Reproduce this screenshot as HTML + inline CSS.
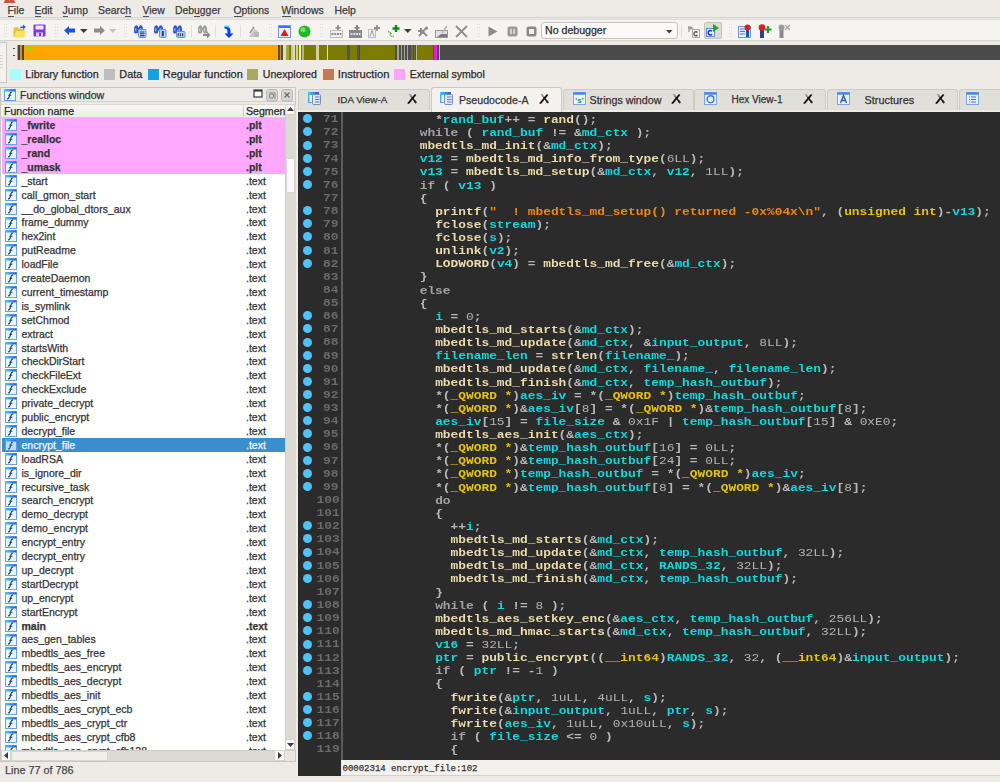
<!DOCTYPE html><html><head><meta charset="utf-8"><style>
*{margin:0;padding:0;box-sizing:border-box}
html,body{width:1000px;height:782px;overflow:hidden;background:#eeebe7;font-family:"Liberation Sans", sans-serif;font-size:10.6px;color:#2e2e2e}
.a{position:absolute}
.t{position:absolute;white-space:pre;line-height:1;-webkit-text-stroke:0.25px currentColor}
.code{position:absolute;white-space:pre;font-family:"Liberation Mono", monospace;font-weight:bold;font-size:12.87px;line-height:13px;transform:scaleY(0.9);transform-origin:0 10px}
.f{color:#e9dbac}
.k{color:#a3a3a3}
.p{color:#b9b9b9}
.v{color:#10d8dc}
.y{color:#e6c20e}
.s{color:#f2860f}
.n{color:#b4b4b4;font-weight:normal}
</style></head><body>
<div class="a" style="left:0;top:0;width:1000px;height:18px;background:#eeebe7;border-bottom:1px solid #d6d3ce"></div>
<div class="t" style="left:7.5px;top:6.3px;font-size:10.4px;color:#3c3c3c">File</div>
<div class="a" style="left:7.50px;top:16px;width:6.35px;height:1px;background:#555"></div>
<div class="t" style="left:34.5px;top:6.3px;font-size:10.4px;color:#3c3c3c">Edit</div>
<div class="a" style="left:34.50px;top:16px;width:6.94px;height:1px;background:#555"></div>
<div class="t" style="left:62.5px;top:6.3px;font-size:10.4px;color:#3c3c3c">Jump</div>
<div class="a" style="left:62.50px;top:16px;width:5.20px;height:1px;background:#555"></div>
<div class="t" style="left:98.0px;top:6.3px;font-size:10.4px;color:#3c3c3c">Search</div>
<div class="a" style="left:125.17px;top:16px;width:5.78px;height:1px;background:#555"></div>
<div class="t" style="left:142.5px;top:6.3px;font-size:10.4px;color:#3c3c3c">View</div>
<div class="a" style="left:142.50px;top:16px;width:6.94px;height:1px;background:#555"></div>
<div class="t" style="left:175.0px;top:6.3px;font-size:10.4px;color:#3c3c3c">Debugger</div>
<div class="a" style="left:194.08px;top:16px;width:5.78px;height:1px;background:#555"></div>
<div class="t" style="left:233.5px;top:6.3px;font-size:10.4px;color:#3c3c3c">Options</div>
<div class="a" style="left:233.50px;top:16px;width:8.09px;height:1px;background:#555"></div>
<div class="t" style="left:281.5px;top:6.3px;font-size:10.4px;color:#3c3c3c">Windows</div>
<div class="a" style="left:281.50px;top:16px;width:9.82px;height:1px;background:#555"></div>
<div class="t" style="left:334.5px;top:6.3px;font-size:10.4px;color:#3c3c3c">Help</div>
<svg class="a" style="left:3px;top:0" width="13" height="3" viewBox="0 0 13 3"><path d="M0.5 3l1.5-3h9l1.5 3z" fill="#c8603e"/><circle cx="4" cy="0.8" r="1.3" fill="#e2452a"/><circle cx="9" cy="0.8" r="1.3" fill="#e2452a"/></svg>
<div class="a" style="left:0;top:19px;width:1000px;height:22px;background:#f6f4f0;border-top:1px solid #dedbd6;border-bottom:1px solid #d6d3ce"></div>
<div class="a" style="left:4px;top:24px;width:3px;height:14px;background:repeating-linear-gradient(90deg,#e0ddd8 0 1px,transparent 1px 2px) 0 0/3px 1px,transparent;-webkit-mask:repeating-linear-gradient(#000 0 1px,transparent 1px 3px)"></div>
<svg class="a" style="left:13px;top:24px" width="13" height="14" viewBox="0 0 13 14"><path d="M0.5 3.5h5l1 1.5h5v8h-11z" fill="#e7c23a"/><path d="M1 13.5l2-6.5h10l-2 6.5z" fill="#f8e060"/><path d="M6.5 4.2q1-2.2 3.5-2.2v-1.5l3 2.5-3 2.5v-1.5q-2 0-3.5 0.2z" fill="#2a63e0"/><path d="M7.5 3q1-0.7 2.5-0.7" stroke="#6ac8ff" stroke-width="0.8" fill="none"/></svg>
<svg class="a" style="left:33px;top:24px" width="13" height="13" viewBox="0 0 13 13"><rect x="0.5" y="0.5" width="12" height="12" rx="1" fill="#7b39de"/><rect x="2.5" y="1.5" width="8" height="4" fill="#f3e4ee"/><rect x="3" y="8.5" width="7" height="4" fill="#d9d0f6"/><rect x="6" y="9" width="2" height="3" fill="#7b39de"/></svg>
<div class="a" style="left:55px;top:24px;width:3px;height:14px;background:repeating-linear-gradient(90deg,#e0ddd8 0 1px,transparent 1px 2px) 0 0/3px 1px,transparent;-webkit-mask:repeating-linear-gradient(#000 0 1px,transparent 1px 3px)"></div>
<svg class="a" style="left:64px;top:26px" width="11" height="9" viewBox="0 0 11 9"><path d="M0 4.5l5-4.5v2.5h6v4h-6v2.5z" fill="#1d4fe0"/></svg>
<svg class="a" style="left:80px;top:29px" width="8" height="4" viewBox="0 0 8 4"><path d="M0 0h7.5l-3.75 4z" fill="#3a3a3a"/></svg>
<svg class="a" style="left:94px;top:26px" width="11" height="9" viewBox="0 0 11 9"><path d="M11 4.5l-5-4.5v2.5h-6v4h6v2.5z" fill="#8e8e8e"/></svg>
<svg class="a" style="left:109px;top:29px" width="8" height="4" viewBox="0 0 8 4"><path d="M0 0h7.5l-3.75 4z" fill="#c4c2be"/></svg>
<div class="a" style="left:124px;top:24px;width:3px;height:14px;background:repeating-linear-gradient(90deg,#e0ddd8 0 1px,transparent 1px 2px) 0 0/3px 1px,transparent;-webkit-mask:repeating-linear-gradient(#000 0 1px,transparent 1px 3px)"></div>
<svg class="a" style="left:133px;top:25px" width="14" height="13" viewBox="0 0 14 13"><path d="M1.2 2.5q0.8-2.5 2.4-2.3q1.4 0.2 1.6 2.3h0.6q0.3-2.1 1.7-2.3q1.6-0.2 2.3 2.3l0.6 4.5q0 1.6-2 1.6t-2.2-1.6v-1.5h-1v1.5q-0.2 1.6-2.2 1.6t-2-1.6z" fill="#2f56c8"/><rect x="2" y="3" width="1.6" height="3.6" rx="0.8" fill="#6fa8f0"/><rect x="6.6" y="3" width="1.6" height="3.6" rx="0.8" fill="#6fa8f0"/><rect x="5.5" y="4.5" width="7.5" height="8" rx="1" fill="#bcd0ea" stroke="#6f93c4"/><path d="M7 7h4.5M7 8.8h4.5M7 10.6h4.5" stroke="#2c3f74" stroke-width="1.1"/></svg>
<svg class="a" style="left:153px;top:25px" width="14" height="13" viewBox="0 0 14 13"><path d="M1.2 2.5q0.8-2.5 2.4-2.3q1.4 0.2 1.6 2.3h0.6q0.3-2.1 1.7-2.3q1.6-0.2 2.3 2.3l0.6 4.5q0 1.6-2 1.6t-2.2-1.6v-1.5h-1v1.5q-0.2 1.6-2.2 1.6t-2-1.6z" fill="#2f56c8"/><rect x="2" y="3" width="1.6" height="3.6" rx="0.8" fill="#6fa8f0"/><rect x="6.6" y="3" width="1.6" height="3.6" rx="0.8" fill="#6fa8f0"/><rect x="6.5" y="4.5" width="6.5" height="8" rx="1" fill="#bcd0ea" stroke="#6f93c4"/><rect x="8.8" y="6" width="2" height="5.2" fill="#2a3f78"/></svg>
<svg class="a" style="left:172px;top:25px" width="14" height="13" viewBox="0 0 14 13"><path d="M1.2 2.5q0.8-2.5 2.4-2.3q1.4 0.2 1.6 2.3h0.6q0.3-2.1 1.7-2.3q1.6-0.2 2.3 2.3l0.6 4.5q0 1.6-2 1.6t-2.2-1.6v-1.5h-1v1.5q-0.2 1.6-2.2 1.6t-2-1.6z" fill="#2f56c8"/><rect x="2" y="3" width="1.6" height="3.6" rx="0.8" fill="#6fa8f0"/><rect x="6.6" y="3" width="1.6" height="3.6" rx="0.8" fill="#6fa8f0"/><rect x="4.5" y="6.5" width="8.5" height="6" rx="1" fill="#bcd0ea" stroke="#6f93c4"/><path d="M6.3 8.2v3M8.5 8.2v3M10.7 8.2v3" stroke="#2a3f78" stroke-width="1.1"/></svg>
<div class="a" style="left:191px;top:25px;width:1px;height:12px;background:#e2dfda"></div>
<svg class="a" style="left:197px;top:25px" width="14" height="13" viewBox="0 0 14 13"><path d="M1.2 2.5q0.8-2.5 2.4-2.3q1.4 0.2 1.6 2.3h0.6q0.3-2.1 1.7-2.3q1.6-0.2 2.3 2.3l0.6 4.5q0 1.6-2 1.6t-2.2-1.6v-1.5h-1v1.5q-0.2 1.6-2.2 1.6t-2-1.6z" fill="#9a9a9a"/><rect x="2" y="3" width="1.6" height="3.6" rx="0.8" fill="#c8c8c8"/><rect x="6.6" y="3" width="1.6" height="3.6" rx="0.8" fill="#c8c8c8"/><path d="M6 9h4v-2.5l3.5 3.5-3.5 3.5v-2.5h-4z" fill="#8a8a8a"/></svg>
<div class="a" style="left:215px;top:25px;width:1px;height:12px;background:#e2dfda"></div>
<svg class="a" style="left:224px;top:25px" width="10" height="13" viewBox="0 0 10 13"><path d="M0.5 1.5c4 -1 6 1 6 5v2h3l-4.5 4.5-4.5-4.5h3v-2c0-2-1-3-3-3z" fill="#0a3cf0"/><path d="M0.5 1.5c2-0.5 3.5 0 4.5 1" stroke="#2ad8f0" stroke-width="1.5" fill="none"/></svg>
<div class="a" style="left:240px;top:25px;width:1px;height:12px;background:#e2dfda"></div>
<svg class="a" style="left:247px;top:25px" width="13" height="13" viewBox="0 0 13 13"><path d="M2 12l5-8 4 2-3 6z" fill="#c9c9c9"/><rect x="7" y="7" width="5" height="5" fill="#b8b8b8"/><path d="M3 8l4-6" stroke="#9a9a9a" stroke-width="1.5"/></svg>
<div class="a" style="left:269px;top:24px;width:3px;height:14px;background:repeating-linear-gradient(90deg,#e0ddd8 0 1px,transparent 1px 2px) 0 0/3px 1px,transparent;-webkit-mask:repeating-linear-gradient(#000 0 1px,transparent 1px 3px)"></div>
<svg class="a" style="left:278px;top:25px" width="13" height="13" viewBox="0 0 13 13"><rect x="0.5" y="0.5" width="12" height="12" fill="#eaf4fa" stroke="#6c9ae6"/><rect x="1" y="1" width="11" height="2" fill="#3478e8"/><path d="M6.5 4l4 7h-8z" fill="#d81e1e"/></svg>
<svg class="a" style="left:298px;top:25px" width="13" height="13" viewBox="0 0 13 13"><circle cx="6.5" cy="6.5" r="6" fill="#22b822"/><circle cx="5" cy="4.8" r="2.5" fill="#8fe88f" opacity="0.8"/></svg>
<div class="a" style="left:320px;top:24px;width:3px;height:14px;background:repeating-linear-gradient(90deg,#e0ddd8 0 1px,transparent 1px 2px) 0 0/3px 1px,transparent;-webkit-mask:repeating-linear-gradient(#000 0 1px,transparent 1px 3px)"></div>
<svg class="a" style="left:330px;top:25px" width="13" height="13" viewBox="0 0 13 13"><path d="M8 0v6M5.5 2.8h5" stroke="#8e8e8e" stroke-width="1.8"/><rect x="0.5" y="5.5" width="12" height="7" fill="#f0f0f0" stroke="#bdbdbd"/><path d="M1.5 9h10" stroke="#8f8f8f" stroke-width="2.2" stroke-dasharray="2 0.8"/></svg>
<svg class="a" style="left:349px;top:25px" width="13" height="13" viewBox="0 0 13 13"><path d="M8 0v6M5.5 2.8h5" stroke="#7e7e7e" stroke-width="1.8"/><rect x="0" y="5" width="13" height="8" fill="#8a8a8a"/><path d="M1.5 9h10" stroke="#e0e0e0" stroke-width="2.2" stroke-dasharray="2 0.8"/></svg>
<svg class="a" style="left:368px;top:25px" width="13" height="13" viewBox="0 0 13 13"><path d="M9 0v6M6 3h6" stroke="#8e8e8e" stroke-width="1.8"/><rect x="0.5" y="4.5" width="7" height="8" fill="#f2f2f2" stroke="#bcbcbc"/><path d="M2 11.5l2-6 2 6" stroke="#9a9a9a" fill="none"/></svg>
<svg class="a" style="left:387px;top:25px" width="13" height="13" viewBox="0 0 13 13"><path d="M9 0v7M5.5 3.5h7" stroke="#13891a" stroke-width="2.4"/><path d="M1 6.5q2 0.5 3 2q-2 1 0 2.5q1.5 1 3 0" stroke="#5ab85a" stroke-width="1.5" fill="none" stroke-dasharray="1.2 0.5"/></svg>
<svg class="a" style="left:404px;top:29px" width="8" height="4" viewBox="0 0 8 4"><path d="M0 0h7.5l-3.75 4z" fill="#3a3a3a"/></svg>
<svg class="a" style="left:416px;top:25px" width="13" height="13" viewBox="0 0 13 13"><path d="M3 11l8-9M2 6h6M5 3v7M7 7l4 4M9 4l3-1" stroke="#8f8f8f" stroke-width="2"/></svg>
<svg class="a" style="left:435px;top:25px" width="13" height="13" viewBox="0 0 13 13"><rect x="0.5" y="5.5" width="12" height="7" fill="#e3e3e3" stroke="#9a9a9a"/><path d="M2 12l4-3h6v3z" fill="#7b7b7b"/><path d="M7 8l5-7" stroke="#b4b4b4" stroke-width="1.6"/></svg>
<svg class="a" style="left:455px;top:25px" width="13" height="13" viewBox="0 0 13 13"><path d="M1 1l11 11M12 1l-11 11" stroke="#8e8e8e" stroke-width="1.8"/></svg>
<div class="a" style="left:477px;top:24px;width:3px;height:14px;background:repeating-linear-gradient(90deg,#e0ddd8 0 1px,transparent 1px 2px) 0 0/3px 1px,transparent;-webkit-mask:repeating-linear-gradient(#000 0 1px,transparent 1px 3px)"></div>
<svg class="a" style="left:488px;top:26px" width="10" height="11" viewBox="0 0 10 11"><path d="M0.5 0.5l9 5-9 5z" fill="#8c8c8c"/></svg>
<svg class="a" style="left:507px;top:26px" width="11" height="11" viewBox="0 0 11 11"><rect x="0.5" y="0.5" width="10" height="10" rx="2" fill="#9a9a9a"/><rect x="3.2" y="3" width="1.6" height="5" fill="#e0e0e0"/><rect x="6.2" y="3" width="1.6" height="5" fill="#e0e0e0"/></svg>
<svg class="a" style="left:526px;top:26px" width="11" height="11" viewBox="0 0 11 11"><rect x="0.5" y="0.5" width="10" height="10" rx="2" fill="#8a8a8a"/><rect x="3" y="3" width="5" height="5" fill="#f2f2f2"/></svg>
<div class="a" style="left:541px;top:22px;width:137px;height:17px;background:#fbfaf8;border:1px solid #c6c3bd;border-radius:3px"></div>
<div class="t" style="left:545px;top:25px;color:#2a2a2a">No debugger</div>
<svg class="a" style="left:666px;top:30px" width="7" height="4" viewBox="0 0 7 4"><path d="M0 0h6.5l-3.25 3.5z" fill="#3c3c3c"/></svg>
<div class="a" style="left:681px;top:25px;width:1px;height:12px;background:#e2dfda"></div>
<svg class="a" style="left:687px;top:25px" width="13" height="13" viewBox="0 0 13 13"><rect x="5.5" y="4.5" width="7" height="8" fill="#f3f3f3" stroke="#a9a9a9"/><path d="M10.5 7.5a2 2 0 1 0 0 2.5" stroke="#555" fill="none" stroke-width="1.3"/><path d="M1 3h4l-1.5-1.5M5 3l-1.5 1.5M2 1v6" stroke="#9c9c9c" stroke-width="1.4" fill="none"/></svg>
<div class="a" style="left:704px;top:22px;width:18px;height:17px;background:#dddbd6;border:1px solid #c4c1bb;border-radius:2px"></div>
<svg class="a" style="left:706px;top:24px" width="14" height="13" viewBox="0 0 14 13"><rect x="0.5" y="4.5" width="8" height="8" fill="#e8f0fa" stroke="#5c8ad6"/><path d="M6 7.2a2.2 2.2 0 1 0 0 3" stroke="#1d3c9c" fill="none" stroke-width="1.5"/><path d="M7 0v8l6-4z" fill="#1fa535"/></svg>
<div class="a" style="left:729px;top:24px;width:3px;height:14px;background:repeating-linear-gradient(90deg,#e0ddd8 0 1px,transparent 1px 2px) 0 0/3px 1px,transparent;-webkit-mask:repeating-linear-gradient(#000 0 1px,transparent 1px 3px)"></div>
<svg class="a" style="left:738px;top:24px" width="14" height="14" viewBox="0 0 14 14"><rect x="0.5" y="2.5" width="12" height="11" fill="#e2ecf8" stroke="#6b98dc"/><path d="M2 5h5M2 7.5h5M2 10h5" stroke="#5a7ab0" stroke-width="1"/><rect x="8" y="6" width="3" height="7" fill="#2b4aa8"/><circle cx="9.5" cy="3.5" r="3" fill="#e41b1b"/></svg>
<svg class="a" style="left:758px;top:24px" width="14" height="14" viewBox="0 0 14 14"><rect x="2" y="6" width="4" height="8" fill="#2b3f98"/><circle cx="4" cy="3.5" r="3.3" fill="#e41b1b"/><path d="M10 2v7M6.5 5.5h7" stroke="#15a22a" stroke-width="2.2"/></svg>
<svg class="a" style="left:778px;top:24px" width="13" height="14" viewBox="0 0 13 14"><rect x="1.5" y="6" width="4" height="8" fill="#8a8a8a"/><circle cx="3.5" cy="3.5" r="3" fill="#9c9c9c"/><path d="M7 1l5 5M12 1l-5 5" stroke="#a8a8a8" stroke-width="1.3"/></svg>
<div class="a" style="left:16.5px;top:45px;width:983.5px;height:15px;background:#4a4a4a"></div>
<div class="a" style="left:-1px;top:42px;width:8px;height:41px;background:#f4f2ef;border:1px solid #c9c6c1;border-left:none"></div>
<div class="a" style="left:0;top:55px;width:3px;height:15px;background:repeating-linear-gradient(#d6d3ce 0 1px,transparent 1px 3px)"></div>
<div class="a" style="left:13px;top:48px;width:1.5px;height:1.2px;background:#444"></div><div class="a" style="left:13px;top:55px;width:1.5px;height:1.2px;background:#444"></div>
<div class="a" style="left:16.5px;top:45px;width:1.00px;height:15px;background:#e8a020"></div>
<div class="a" style="left:17.5px;top:45px;width:2.00px;height:15px;background:#454545"></div>
<div class="a" style="left:19.5px;top:45px;width:2.00px;height:15px;background:#d09030"></div>
<div class="a" style="left:21.5px;top:45px;width:2.50px;height:15px;background:#454545"></div>
<div class="a" style="left:24px;top:45px;width:254.00px;height:15px;background:#ffa500"></div>
<div class="a" style="left:278px;top:45px;width:2.00px;height:15px;background:#505050"></div>
<div class="a" style="left:280px;top:45px;width:1.00px;height:15px;background:#d88a10"></div>
<div class="a" style="left:281px;top:45px;width:2.20px;height:15px;background:#505050"></div>
<div class="a" style="left:283.2px;top:45px;width:2.80px;height:15px;background:#e2e2a8"></div>
<div class="a" style="left:286px;top:45px;width:3.00px;height:15px;background:#a5a54a"></div>
<div class="a" style="left:289px;top:45px;width:2.00px;height:15px;background:#7b7b00"></div>
<div class="a" style="left:291px;top:45px;width:1.80px;height:15px;background:#c8c890"></div>
<div class="a" style="left:292.8px;top:45px;width:2.00px;height:15px;background:#dede9e"></div>
<div class="a" style="left:294.8px;top:45px;width:1.60px;height:15px;background:#7b7b00"></div>
<div class="a" style="left:296.4px;top:45px;width:1.20px;height:15px;background:#d0d098"></div>
<div class="a" style="left:297.6px;top:45px;width:1.20px;height:15px;background:#7b7b00"></div>
<div class="a" style="left:298.8px;top:45px;width:2.40px;height:15px;background:#ececb8"></div>
<div class="a" style="left:301.2px;top:45px;width:1.20px;height:15px;background:#7b7b00"></div>
<div class="a" style="left:302.4px;top:45px;width:1.20px;height:15px;background:#b8b870"></div>
<div class="a" style="left:303.6px;top:45px;width:12.40px;height:15px;background:#7b7b00"></div>
<div class="a" style="left:316px;top:45px;width:3.20px;height:15px;background:#d2d29a"></div>
<div class="a" style="left:319.2px;top:45px;width:7.60px;height:15px;background:#7b7b00"></div>
<div class="a" style="left:326.8px;top:45px;width:1.20px;height:15px;background:#e0e0b0"></div>
<div class="a" style="left:328px;top:45px;width:19.20px;height:15px;background:#7b7b00"></div>
<div class="a" style="left:347.2px;top:45px;width:2.40px;height:15px;background:#555"></div>
<div class="a" style="left:349.6px;top:45px;width:7.70px;height:15px;background:#7b7b00"></div>
<div class="a" style="left:357.3px;top:45px;width:2.20px;height:15px;background:#555"></div>
<div class="a" style="left:359.5px;top:45px;width:35.50px;height:15px;background:#7b7b00"></div>
<div class="a" style="left:395px;top:45px;width:2.30px;height:15px;background:#4e4e4e"></div>
<div class="a" style="left:397.3px;top:45px;width:1.70px;height:15px;background:#a8a888"></div>
<div class="a" style="left:399px;top:45px;width:1.50px;height:15px;background:#4e4e4e"></div>
<div class="a" style="left:400.5px;top:45px;width:1.70px;height:15px;background:#a8a888"></div>
<div class="a" style="left:402.2px;top:45px;width:1.70px;height:15px;background:#4e4e4e"></div>
<div class="a" style="left:403.9px;top:45px;width:1.10px;height:15px;background:#a8a888"></div>
<div class="a" style="left:405px;top:45px;width:2.20px;height:15px;background:#4e4e4e"></div>
<div class="a" style="left:407.2px;top:45px;width:1.10px;height:15px;background:#a8a888"></div>
<div class="a" style="left:408.3px;top:45px;width:2.70px;height:15px;background:#4e4e4e"></div>
<div class="a" style="left:411px;top:45px;width:1.50px;height:15px;background:#6b6b30"></div>
<div class="a" style="left:412.5px;top:45px;width:1.50px;height:15px;background:#4e4e4e"></div>
<div class="a" style="left:414px;top:45px;width:1.00px;height:15px;background:#6b6b30"></div>
<div class="a" style="left:415px;top:45px;width:1.00px;height:15px;background:#4e4e4e"></div>
<div class="a" style="left:416px;top:45px;width:1.00px;height:15px;background:#b8b898"></div>
<div class="a" style="left:417px;top:45px;width:16.00px;height:15px;background:#7b7b00"></div>
<div class="a" style="left:433px;top:45px;width:1.00px;height:15px;background:#4e4e4e"></div>
<div class="a" style="left:434px;top:45px;width:2.90px;height:15px;background:#e020e0"></div>
<div class="a" style="left:436.9px;top:45px;width:1.60px;height:15px;background:#4e4e4e"></div>
<div class="a" style="left:438.5px;top:45px;width:1.10px;height:15px;background:#b8b8a0"></div>
<div class="a" style="left:28px;top:46px;width:3px;height:5px;background:#66ee22;border-radius:50% 50% 50% 50%/40% 40% 60% 60%"></div>
<div class="a" style="left:10px;top:69px;width:11px;height:11px;background:#a8fbff"></div>
<div class="t" style="left:25.3px;top:68.8px;font-size:10.75px;color:#2a2a2a">Library function</div>
<div class="a" style="left:104px;top:69px;width:11px;height:11px;background:#bdbdbd"></div>
<div class="t" style="left:119.3px;top:68.8px;font-size:10.85px;color:#2a2a2a">Data</div>
<div class="a" style="left:148px;top:69px;width:11px;height:11px;background:#10a2e4"></div>
<div class="t" style="left:162.8px;top:68.8px;font-size:10.99px;color:#2a2a2a">Regular function</div>
<div class="a" style="left:247px;top:69px;width:11px;height:11px;background:#a9a965"></div>
<div class="t" style="left:262.8px;top:68.8px;font-size:10.57px;color:#2a2a2a">Unexplored</div>
<div class="a" style="left:322.5px;top:69px;width:11px;height:11px;background:#c07a55"></div>
<div class="t" style="left:337.8px;top:68.8px;font-size:11.2px;color:#2a2a2a">Instruction</div>
<div class="a" style="left:394px;top:69px;width:11px;height:11px;background:#ffa5ff"></div>
<div class="t" style="left:409.8px;top:68.8px;font-size:10.55px;color:#2a2a2a">External symbol</div>
<div class="a" style="left:0;top:87px;width:296px;height:675px;background:#eeebe7;border:1px solid #c9c6c1"></div>
<div class="a" style="left:1px;top:88px;width:294px;height:14px;background:#eeece8;border-bottom:1px solid #d3d0cb"></div>
<svg class="a" style="left:4px;top:89px" width="12" height="12" viewBox="0 0 12 12"><defs><linearGradient id="g4_890" x1="0" x2="1"><stop offset="0" stop-color="#3ad0f4"/><stop offset="1" stop-color="#2a56d8"/></linearGradient></defs><rect x="0.5" y="0.5" width="11" height="11" fill="#e4f8fc" stroke="#6e9ee6"/><rect x="0.5" y="0.5" width="11" height="2" fill="url(#g4_890)"/><path d="M8.2 3.2c-1.3-0.5-1.9 0.5-2.2 1.6l-1 3.6c-0.3 1.1-0.9 1.6-2 1.4" stroke="#2d3d60" stroke-width="1.2" fill="none"/><path d="M4.3 6.3h3" stroke="#2d3d60" stroke-width="1"/></svg>
<div class="t" style="left:20px;top:90px;color:#333">Functions window</div>
<svg class="a" style="left:253px;top:89px" width="40" height="13" viewBox="0 0 40 13"><rect x="1" y="1" width="8" height="7" fill="#fff" stroke="#3a3a3a" stroke-width="1.2"/><rect x="1" y="1" width="8" height="1.6" fill="#3a3a3a"/><rect x="13.5" y="0.5" width="11" height="11.5" rx="2" fill="#d8d6d2" stroke="#b9b6b1"/><circle cx="18.5" cy="7" r="2.2" fill="none" stroke="#7a7a7a"/><path d="M16 4h6v6" stroke="#8a8a8a" fill="none"/><rect x="28.5" y="0.5" width="11" height="11.5" rx="2" fill="#d8d6d2" stroke="#b9b6b1"/><path d="M31.5 3.5l5 5M36.5 3.5l-5 5" stroke="#6a6a6a" stroke-width="1.2"/></svg>
<div class="a" style="left:1px;top:104px;width:284px;height:14px;background:linear-gradient(#f7f6f4,#efede9);border-top:1px solid #dcd9d4;border-bottom:1px solid #d4d1cc"></div>
<div class="a" style="left:243px;top:105px;width:1px;height:12px;background:#d4d1cc"></div>
<div class="t" style="left:4px;top:106px;color:#2a2a2a">Function name</div>
<div class="a" style="left:244px;top:104px;width:41px;height:14px;overflow:hidden"><div class="t" style="left:2px;top:2px;color:#2a2a2a">Segment</div></div>
<svg width="0" height="0" style="position:absolute"><defs><linearGradient id="gl" x1="0" x2="1"><stop offset="0" stop-color="#3ad0f4"/><stop offset="1" stop-color="#2a56d8"/></linearGradient></defs></svg>
<div class="a" style="left:1px;top:118px;width:284px;height:632px;background:#fff;overflow:hidden">
<div class="a" style="left:1px;top:0.40px;width:284px;height:13.90px;background:#ffa8ff"></div>
<svg class="a" style="left:3.8px;top:1.20px" width="12" height="12" viewBox="0 0 12 12"><rect x="0.5" y="0.5" width="11" height="11" fill="#e4f8fc" stroke="#6e9ee6"/><rect x="0.5" y="0.5" width="11" height="2" fill="url(#gl)"/><path d="M8.2 3.2c-1.3-0.5-1.9 0.5-2.2 1.6l-1 3.6c-0.3 1.1-0.9 1.6-2 1.4" stroke="#2d3d60" stroke-width="1.2" fill="none"/><path d="M4.3 6.3h3" stroke="#2d3d60" stroke-width="1"/></svg>
<div class="t" style="left:20.5px;top:2.10px;font-size:10.5px;color:#333;font-weight:bold">_fwrite</div>
<div class="t" style="left:245px;top:2.10px;font-size:10.5px;color:#333;font-weight:bold">.plt</div>
<div class="a" style="left:1px;top:14.30px;width:284px;height:13.90px;background:#ffa8ff"></div>
<svg class="a" style="left:3.8px;top:15.10px" width="12" height="12" viewBox="0 0 12 12"><rect x="0.5" y="0.5" width="11" height="11" fill="#e4f8fc" stroke="#6e9ee6"/><rect x="0.5" y="0.5" width="11" height="2" fill="url(#gl)"/><path d="M8.2 3.2c-1.3-0.5-1.9 0.5-2.2 1.6l-1 3.6c-0.3 1.1-0.9 1.6-2 1.4" stroke="#2d3d60" stroke-width="1.2" fill="none"/><path d="M4.3 6.3h3" stroke="#2d3d60" stroke-width="1"/></svg>
<div class="t" style="left:20.5px;top:16.00px;font-size:10.5px;color:#333;font-weight:bold">_realloc</div>
<div class="t" style="left:245px;top:16.00px;font-size:10.5px;color:#333;font-weight:bold">.plt</div>
<div class="a" style="left:1px;top:28.20px;width:284px;height:13.90px;background:#ffa8ff"></div>
<svg class="a" style="left:3.8px;top:29.00px" width="12" height="12" viewBox="0 0 12 12"><rect x="0.5" y="0.5" width="11" height="11" fill="#e4f8fc" stroke="#6e9ee6"/><rect x="0.5" y="0.5" width="11" height="2" fill="url(#gl)"/><path d="M8.2 3.2c-1.3-0.5-1.9 0.5-2.2 1.6l-1 3.6c-0.3 1.1-0.9 1.6-2 1.4" stroke="#2d3d60" stroke-width="1.2" fill="none"/><path d="M4.3 6.3h3" stroke="#2d3d60" stroke-width="1"/></svg>
<div class="t" style="left:20.5px;top:29.90px;font-size:10.5px;color:#333;font-weight:bold">_rand</div>
<div class="t" style="left:245px;top:29.90px;font-size:10.5px;color:#333;font-weight:bold">.plt</div>
<div class="a" style="left:1px;top:42.10px;width:284px;height:13.90px;background:#ffa8ff"></div>
<svg class="a" style="left:3.8px;top:42.90px" width="12" height="12" viewBox="0 0 12 12"><rect x="0.5" y="0.5" width="11" height="11" fill="#e4f8fc" stroke="#6e9ee6"/><rect x="0.5" y="0.5" width="11" height="2" fill="url(#gl)"/><path d="M8.2 3.2c-1.3-0.5-1.9 0.5-2.2 1.6l-1 3.6c-0.3 1.1-0.9 1.6-2 1.4" stroke="#2d3d60" stroke-width="1.2" fill="none"/><path d="M4.3 6.3h3" stroke="#2d3d60" stroke-width="1"/></svg>
<div class="t" style="left:20.5px;top:43.80px;font-size:10.5px;color:#333;font-weight:bold">_umask</div>
<div class="t" style="left:245px;top:43.80px;font-size:10.5px;color:#333;font-weight:bold">.plt</div>
<svg class="a" style="left:3.8px;top:56.80px" width="12" height="12" viewBox="0 0 12 12"><rect x="0.5" y="0.5" width="11" height="11" fill="#e4f8fc" stroke="#6e9ee6"/><rect x="0.5" y="0.5" width="11" height="2" fill="url(#gl)"/><path d="M8.2 3.2c-1.3-0.5-1.9 0.5-2.2 1.6l-1 3.6c-0.3 1.1-0.9 1.6-2 1.4" stroke="#2d3d60" stroke-width="1.2" fill="none"/><path d="M4.3 6.3h3" stroke="#2d3d60" stroke-width="1"/></svg>
<div class="t" style="left:20.5px;top:57.70px;font-size:10.5px;color:#333;font-weight:normal">_start</div>
<div class="t" style="left:245px;top:57.70px;font-size:10.5px;color:#333;font-weight:normal">.text</div>
<svg class="a" style="left:3.8px;top:70.70px" width="12" height="12" viewBox="0 0 12 12"><rect x="0.5" y="0.5" width="11" height="11" fill="#e4f8fc" stroke="#6e9ee6"/><rect x="0.5" y="0.5" width="11" height="2" fill="url(#gl)"/><path d="M8.2 3.2c-1.3-0.5-1.9 0.5-2.2 1.6l-1 3.6c-0.3 1.1-0.9 1.6-2 1.4" stroke="#2d3d60" stroke-width="1.2" fill="none"/><path d="M4.3 6.3h3" stroke="#2d3d60" stroke-width="1"/></svg>
<div class="t" style="left:20.5px;top:71.60px;font-size:10.5px;color:#333;font-weight:normal">call_gmon_start</div>
<div class="t" style="left:245px;top:71.60px;font-size:10.5px;color:#333;font-weight:normal">.text</div>
<svg class="a" style="left:3.8px;top:84.60px" width="12" height="12" viewBox="0 0 12 12"><rect x="0.5" y="0.5" width="11" height="11" fill="#e4f8fc" stroke="#6e9ee6"/><rect x="0.5" y="0.5" width="11" height="2" fill="url(#gl)"/><path d="M8.2 3.2c-1.3-0.5-1.9 0.5-2.2 1.6l-1 3.6c-0.3 1.1-0.9 1.6-2 1.4" stroke="#2d3d60" stroke-width="1.2" fill="none"/><path d="M4.3 6.3h3" stroke="#2d3d60" stroke-width="1"/></svg>
<div class="t" style="left:20.5px;top:85.50px;font-size:10.5px;color:#333;font-weight:normal">__do_global_dtors_aux</div>
<div class="t" style="left:245px;top:85.50px;font-size:10.5px;color:#333;font-weight:normal">.text</div>
<svg class="a" style="left:3.8px;top:98.50px" width="12" height="12" viewBox="0 0 12 12"><rect x="0.5" y="0.5" width="11" height="11" fill="#e4f8fc" stroke="#6e9ee6"/><rect x="0.5" y="0.5" width="11" height="2" fill="url(#gl)"/><path d="M8.2 3.2c-1.3-0.5-1.9 0.5-2.2 1.6l-1 3.6c-0.3 1.1-0.9 1.6-2 1.4" stroke="#2d3d60" stroke-width="1.2" fill="none"/><path d="M4.3 6.3h3" stroke="#2d3d60" stroke-width="1"/></svg>
<div class="t" style="left:20.5px;top:99.40px;font-size:10.5px;color:#333;font-weight:normal">frame_dummy</div>
<div class="t" style="left:245px;top:99.40px;font-size:10.5px;color:#333;font-weight:normal">.text</div>
<svg class="a" style="left:3.8px;top:112.40px" width="12" height="12" viewBox="0 0 12 12"><rect x="0.5" y="0.5" width="11" height="11" fill="#e4f8fc" stroke="#6e9ee6"/><rect x="0.5" y="0.5" width="11" height="2" fill="url(#gl)"/><path d="M8.2 3.2c-1.3-0.5-1.9 0.5-2.2 1.6l-1 3.6c-0.3 1.1-0.9 1.6-2 1.4" stroke="#2d3d60" stroke-width="1.2" fill="none"/><path d="M4.3 6.3h3" stroke="#2d3d60" stroke-width="1"/></svg>
<div class="t" style="left:20.5px;top:113.30px;font-size:10.5px;color:#333;font-weight:normal">hex2int</div>
<div class="t" style="left:245px;top:113.30px;font-size:10.5px;color:#333;font-weight:normal">.text</div>
<svg class="a" style="left:3.8px;top:126.30px" width="12" height="12" viewBox="0 0 12 12"><rect x="0.5" y="0.5" width="11" height="11" fill="#e4f8fc" stroke="#6e9ee6"/><rect x="0.5" y="0.5" width="11" height="2" fill="url(#gl)"/><path d="M8.2 3.2c-1.3-0.5-1.9 0.5-2.2 1.6l-1 3.6c-0.3 1.1-0.9 1.6-2 1.4" stroke="#2d3d60" stroke-width="1.2" fill="none"/><path d="M4.3 6.3h3" stroke="#2d3d60" stroke-width="1"/></svg>
<div class="t" style="left:20.5px;top:127.20px;font-size:10.5px;color:#333;font-weight:normal">putReadme</div>
<div class="t" style="left:245px;top:127.20px;font-size:10.5px;color:#333;font-weight:normal">.text</div>
<svg class="a" style="left:3.8px;top:140.20px" width="12" height="12" viewBox="0 0 12 12"><rect x="0.5" y="0.5" width="11" height="11" fill="#e4f8fc" stroke="#6e9ee6"/><rect x="0.5" y="0.5" width="11" height="2" fill="url(#gl)"/><path d="M8.2 3.2c-1.3-0.5-1.9 0.5-2.2 1.6l-1 3.6c-0.3 1.1-0.9 1.6-2 1.4" stroke="#2d3d60" stroke-width="1.2" fill="none"/><path d="M4.3 6.3h3" stroke="#2d3d60" stroke-width="1"/></svg>
<div class="t" style="left:20.5px;top:141.10px;font-size:10.5px;color:#333;font-weight:normal">loadFile</div>
<div class="t" style="left:245px;top:141.10px;font-size:10.5px;color:#333;font-weight:normal">.text</div>
<svg class="a" style="left:3.8px;top:154.10px" width="12" height="12" viewBox="0 0 12 12"><rect x="0.5" y="0.5" width="11" height="11" fill="#e4f8fc" stroke="#6e9ee6"/><rect x="0.5" y="0.5" width="11" height="2" fill="url(#gl)"/><path d="M8.2 3.2c-1.3-0.5-1.9 0.5-2.2 1.6l-1 3.6c-0.3 1.1-0.9 1.6-2 1.4" stroke="#2d3d60" stroke-width="1.2" fill="none"/><path d="M4.3 6.3h3" stroke="#2d3d60" stroke-width="1"/></svg>
<div class="t" style="left:20.5px;top:155.00px;font-size:10.5px;color:#333;font-weight:normal">createDaemon</div>
<div class="t" style="left:245px;top:155.00px;font-size:10.5px;color:#333;font-weight:normal">.text</div>
<svg class="a" style="left:3.8px;top:168.00px" width="12" height="12" viewBox="0 0 12 12"><rect x="0.5" y="0.5" width="11" height="11" fill="#e4f8fc" stroke="#6e9ee6"/><rect x="0.5" y="0.5" width="11" height="2" fill="url(#gl)"/><path d="M8.2 3.2c-1.3-0.5-1.9 0.5-2.2 1.6l-1 3.6c-0.3 1.1-0.9 1.6-2 1.4" stroke="#2d3d60" stroke-width="1.2" fill="none"/><path d="M4.3 6.3h3" stroke="#2d3d60" stroke-width="1"/></svg>
<div class="t" style="left:20.5px;top:168.90px;font-size:10.5px;color:#333;font-weight:normal">current_timestamp</div>
<div class="t" style="left:245px;top:168.90px;font-size:10.5px;color:#333;font-weight:normal">.text</div>
<svg class="a" style="left:3.8px;top:181.90px" width="12" height="12" viewBox="0 0 12 12"><rect x="0.5" y="0.5" width="11" height="11" fill="#e4f8fc" stroke="#6e9ee6"/><rect x="0.5" y="0.5" width="11" height="2" fill="url(#gl)"/><path d="M8.2 3.2c-1.3-0.5-1.9 0.5-2.2 1.6l-1 3.6c-0.3 1.1-0.9 1.6-2 1.4" stroke="#2d3d60" stroke-width="1.2" fill="none"/><path d="M4.3 6.3h3" stroke="#2d3d60" stroke-width="1"/></svg>
<div class="t" style="left:20.5px;top:182.80px;font-size:10.5px;color:#333;font-weight:normal">is_symlink</div>
<div class="t" style="left:245px;top:182.80px;font-size:10.5px;color:#333;font-weight:normal">.text</div>
<svg class="a" style="left:3.8px;top:195.80px" width="12" height="12" viewBox="0 0 12 12"><rect x="0.5" y="0.5" width="11" height="11" fill="#e4f8fc" stroke="#6e9ee6"/><rect x="0.5" y="0.5" width="11" height="2" fill="url(#gl)"/><path d="M8.2 3.2c-1.3-0.5-1.9 0.5-2.2 1.6l-1 3.6c-0.3 1.1-0.9 1.6-2 1.4" stroke="#2d3d60" stroke-width="1.2" fill="none"/><path d="M4.3 6.3h3" stroke="#2d3d60" stroke-width="1"/></svg>
<div class="t" style="left:20.5px;top:196.70px;font-size:10.5px;color:#333;font-weight:normal">setChmod</div>
<div class="t" style="left:245px;top:196.70px;font-size:10.5px;color:#333;font-weight:normal">.text</div>
<svg class="a" style="left:3.8px;top:209.70px" width="12" height="12" viewBox="0 0 12 12"><rect x="0.5" y="0.5" width="11" height="11" fill="#e4f8fc" stroke="#6e9ee6"/><rect x="0.5" y="0.5" width="11" height="2" fill="url(#gl)"/><path d="M8.2 3.2c-1.3-0.5-1.9 0.5-2.2 1.6l-1 3.6c-0.3 1.1-0.9 1.6-2 1.4" stroke="#2d3d60" stroke-width="1.2" fill="none"/><path d="M4.3 6.3h3" stroke="#2d3d60" stroke-width="1"/></svg>
<div class="t" style="left:20.5px;top:210.60px;font-size:10.5px;color:#333;font-weight:normal">extract</div>
<div class="t" style="left:245px;top:210.60px;font-size:10.5px;color:#333;font-weight:normal">.text</div>
<svg class="a" style="left:3.8px;top:223.60px" width="12" height="12" viewBox="0 0 12 12"><rect x="0.5" y="0.5" width="11" height="11" fill="#e4f8fc" stroke="#6e9ee6"/><rect x="0.5" y="0.5" width="11" height="2" fill="url(#gl)"/><path d="M8.2 3.2c-1.3-0.5-1.9 0.5-2.2 1.6l-1 3.6c-0.3 1.1-0.9 1.6-2 1.4" stroke="#2d3d60" stroke-width="1.2" fill="none"/><path d="M4.3 6.3h3" stroke="#2d3d60" stroke-width="1"/></svg>
<div class="t" style="left:20.5px;top:224.50px;font-size:10.5px;color:#333;font-weight:normal">startsWith</div>
<div class="t" style="left:245px;top:224.50px;font-size:10.5px;color:#333;font-weight:normal">.text</div>
<svg class="a" style="left:3.8px;top:237.50px" width="12" height="12" viewBox="0 0 12 12"><rect x="0.5" y="0.5" width="11" height="11" fill="#e4f8fc" stroke="#6e9ee6"/><rect x="0.5" y="0.5" width="11" height="2" fill="url(#gl)"/><path d="M8.2 3.2c-1.3-0.5-1.9 0.5-2.2 1.6l-1 3.6c-0.3 1.1-0.9 1.6-2 1.4" stroke="#2d3d60" stroke-width="1.2" fill="none"/><path d="M4.3 6.3h3" stroke="#2d3d60" stroke-width="1"/></svg>
<div class="t" style="left:20.5px;top:238.40px;font-size:10.5px;color:#333;font-weight:normal">checkDirStart</div>
<div class="t" style="left:245px;top:238.40px;font-size:10.5px;color:#333;font-weight:normal">.text</div>
<svg class="a" style="left:3.8px;top:251.40px" width="12" height="12" viewBox="0 0 12 12"><rect x="0.5" y="0.5" width="11" height="11" fill="#e4f8fc" stroke="#6e9ee6"/><rect x="0.5" y="0.5" width="11" height="2" fill="url(#gl)"/><path d="M8.2 3.2c-1.3-0.5-1.9 0.5-2.2 1.6l-1 3.6c-0.3 1.1-0.9 1.6-2 1.4" stroke="#2d3d60" stroke-width="1.2" fill="none"/><path d="M4.3 6.3h3" stroke="#2d3d60" stroke-width="1"/></svg>
<div class="t" style="left:20.5px;top:252.30px;font-size:10.5px;color:#333;font-weight:normal">checkFileExt</div>
<div class="t" style="left:245px;top:252.30px;font-size:10.5px;color:#333;font-weight:normal">.text</div>
<svg class="a" style="left:3.8px;top:265.30px" width="12" height="12" viewBox="0 0 12 12"><rect x="0.5" y="0.5" width="11" height="11" fill="#e4f8fc" stroke="#6e9ee6"/><rect x="0.5" y="0.5" width="11" height="2" fill="url(#gl)"/><path d="M8.2 3.2c-1.3-0.5-1.9 0.5-2.2 1.6l-1 3.6c-0.3 1.1-0.9 1.6-2 1.4" stroke="#2d3d60" stroke-width="1.2" fill="none"/><path d="M4.3 6.3h3" stroke="#2d3d60" stroke-width="1"/></svg>
<div class="t" style="left:20.5px;top:266.20px;font-size:10.5px;color:#333;font-weight:normal">checkExclude</div>
<div class="t" style="left:245px;top:266.20px;font-size:10.5px;color:#333;font-weight:normal">.text</div>
<svg class="a" style="left:3.8px;top:279.20px" width="12" height="12" viewBox="0 0 12 12"><rect x="0.5" y="0.5" width="11" height="11" fill="#e4f8fc" stroke="#6e9ee6"/><rect x="0.5" y="0.5" width="11" height="2" fill="url(#gl)"/><path d="M8.2 3.2c-1.3-0.5-1.9 0.5-2.2 1.6l-1 3.6c-0.3 1.1-0.9 1.6-2 1.4" stroke="#2d3d60" stroke-width="1.2" fill="none"/><path d="M4.3 6.3h3" stroke="#2d3d60" stroke-width="1"/></svg>
<div class="t" style="left:20.5px;top:280.10px;font-size:10.5px;color:#333;font-weight:normal">private_decrypt</div>
<div class="t" style="left:245px;top:280.10px;font-size:10.5px;color:#333;font-weight:normal">.text</div>
<svg class="a" style="left:3.8px;top:293.10px" width="12" height="12" viewBox="0 0 12 12"><rect x="0.5" y="0.5" width="11" height="11" fill="#e4f8fc" stroke="#6e9ee6"/><rect x="0.5" y="0.5" width="11" height="2" fill="url(#gl)"/><path d="M8.2 3.2c-1.3-0.5-1.9 0.5-2.2 1.6l-1 3.6c-0.3 1.1-0.9 1.6-2 1.4" stroke="#2d3d60" stroke-width="1.2" fill="none"/><path d="M4.3 6.3h3" stroke="#2d3d60" stroke-width="1"/></svg>
<div class="t" style="left:20.5px;top:294.00px;font-size:10.5px;color:#333;font-weight:normal">public_encrypt</div>
<div class="t" style="left:245px;top:294.00px;font-size:10.5px;color:#333;font-weight:normal">.text</div>
<svg class="a" style="left:3.8px;top:307.00px" width="12" height="12" viewBox="0 0 12 12"><rect x="0.5" y="0.5" width="11" height="11" fill="#e4f8fc" stroke="#6e9ee6"/><rect x="0.5" y="0.5" width="11" height="2" fill="url(#gl)"/><path d="M8.2 3.2c-1.3-0.5-1.9 0.5-2.2 1.6l-1 3.6c-0.3 1.1-0.9 1.6-2 1.4" stroke="#2d3d60" stroke-width="1.2" fill="none"/><path d="M4.3 6.3h3" stroke="#2d3d60" stroke-width="1"/></svg>
<div class="t" style="left:20.5px;top:307.90px;font-size:10.5px;color:#333;font-weight:normal">decrypt_file</div>
<div class="t" style="left:245px;top:307.90px;font-size:10.5px;color:#333;font-weight:normal">.text</div>
<div class="a" style="left:1px;top:320.10px;width:284px;height:13.90px;background:#3b8ecc"></div>
<svg class="a" style="left:3.8px;top:320.90px;opacity:0.75" width="12" height="12" viewBox="0 0 12 12"><rect x="0.5" y="0.5" width="11" height="11" fill="#e4f8fc" stroke="#6e9ee6"/><rect x="0.5" y="0.5" width="11" height="2" fill="url(#gl)"/><path d="M8.2 3.2c-1.3-0.5-1.9 0.5-2.2 1.6l-1 3.6c-0.3 1.1-0.9 1.6-2 1.4" stroke="#2d3d60" stroke-width="1.2" fill="none"/><path d="M4.3 6.3h3" stroke="#2d3d60" stroke-width="1"/></svg>
<div class="t" style="left:20.5px;top:321.80px;font-size:10.5px;color:#f4f8fc;font-weight:normal">encrypt_file</div>
<div class="t" style="left:245px;top:321.80px;font-size:10.5px;color:#f4f8fc;font-weight:normal">.text</div>
<svg class="a" style="left:3.8px;top:334.80px" width="12" height="12" viewBox="0 0 12 12"><rect x="0.5" y="0.5" width="11" height="11" fill="#e4f8fc" stroke="#6e9ee6"/><rect x="0.5" y="0.5" width="11" height="2" fill="url(#gl)"/><path d="M8.2 3.2c-1.3-0.5-1.9 0.5-2.2 1.6l-1 3.6c-0.3 1.1-0.9 1.6-2 1.4" stroke="#2d3d60" stroke-width="1.2" fill="none"/><path d="M4.3 6.3h3" stroke="#2d3d60" stroke-width="1"/></svg>
<div class="t" style="left:20.5px;top:335.70px;font-size:10.5px;color:#333;font-weight:normal">loadRSA</div>
<div class="t" style="left:245px;top:335.70px;font-size:10.5px;color:#333;font-weight:normal">.text</div>
<svg class="a" style="left:3.8px;top:348.70px" width="12" height="12" viewBox="0 0 12 12"><rect x="0.5" y="0.5" width="11" height="11" fill="#e4f8fc" stroke="#6e9ee6"/><rect x="0.5" y="0.5" width="11" height="2" fill="url(#gl)"/><path d="M8.2 3.2c-1.3-0.5-1.9 0.5-2.2 1.6l-1 3.6c-0.3 1.1-0.9 1.6-2 1.4" stroke="#2d3d60" stroke-width="1.2" fill="none"/><path d="M4.3 6.3h3" stroke="#2d3d60" stroke-width="1"/></svg>
<div class="t" style="left:20.5px;top:349.60px;font-size:10.5px;color:#333;font-weight:normal">is_ignore_dir</div>
<div class="t" style="left:245px;top:349.60px;font-size:10.5px;color:#333;font-weight:normal">.text</div>
<svg class="a" style="left:3.8px;top:362.60px" width="12" height="12" viewBox="0 0 12 12"><rect x="0.5" y="0.5" width="11" height="11" fill="#e4f8fc" stroke="#6e9ee6"/><rect x="0.5" y="0.5" width="11" height="2" fill="url(#gl)"/><path d="M8.2 3.2c-1.3-0.5-1.9 0.5-2.2 1.6l-1 3.6c-0.3 1.1-0.9 1.6-2 1.4" stroke="#2d3d60" stroke-width="1.2" fill="none"/><path d="M4.3 6.3h3" stroke="#2d3d60" stroke-width="1"/></svg>
<div class="t" style="left:20.5px;top:363.50px;font-size:10.5px;color:#333;font-weight:normal">recursive_task</div>
<div class="t" style="left:245px;top:363.50px;font-size:10.5px;color:#333;font-weight:normal">.text</div>
<svg class="a" style="left:3.8px;top:376.50px" width="12" height="12" viewBox="0 0 12 12"><rect x="0.5" y="0.5" width="11" height="11" fill="#e4f8fc" stroke="#6e9ee6"/><rect x="0.5" y="0.5" width="11" height="2" fill="url(#gl)"/><path d="M8.2 3.2c-1.3-0.5-1.9 0.5-2.2 1.6l-1 3.6c-0.3 1.1-0.9 1.6-2 1.4" stroke="#2d3d60" stroke-width="1.2" fill="none"/><path d="M4.3 6.3h3" stroke="#2d3d60" stroke-width="1"/></svg>
<div class="t" style="left:20.5px;top:377.40px;font-size:10.5px;color:#333;font-weight:normal">search_encrypt</div>
<div class="t" style="left:245px;top:377.40px;font-size:10.5px;color:#333;font-weight:normal">.text</div>
<svg class="a" style="left:3.8px;top:390.40px" width="12" height="12" viewBox="0 0 12 12"><rect x="0.5" y="0.5" width="11" height="11" fill="#e4f8fc" stroke="#6e9ee6"/><rect x="0.5" y="0.5" width="11" height="2" fill="url(#gl)"/><path d="M8.2 3.2c-1.3-0.5-1.9 0.5-2.2 1.6l-1 3.6c-0.3 1.1-0.9 1.6-2 1.4" stroke="#2d3d60" stroke-width="1.2" fill="none"/><path d="M4.3 6.3h3" stroke="#2d3d60" stroke-width="1"/></svg>
<div class="t" style="left:20.5px;top:391.30px;font-size:10.5px;color:#333;font-weight:normal">demo_decrypt</div>
<div class="t" style="left:245px;top:391.30px;font-size:10.5px;color:#333;font-weight:normal">.text</div>
<svg class="a" style="left:3.8px;top:404.30px" width="12" height="12" viewBox="0 0 12 12"><rect x="0.5" y="0.5" width="11" height="11" fill="#e4f8fc" stroke="#6e9ee6"/><rect x="0.5" y="0.5" width="11" height="2" fill="url(#gl)"/><path d="M8.2 3.2c-1.3-0.5-1.9 0.5-2.2 1.6l-1 3.6c-0.3 1.1-0.9 1.6-2 1.4" stroke="#2d3d60" stroke-width="1.2" fill="none"/><path d="M4.3 6.3h3" stroke="#2d3d60" stroke-width="1"/></svg>
<div class="t" style="left:20.5px;top:405.20px;font-size:10.5px;color:#333;font-weight:normal">demo_encrypt</div>
<div class="t" style="left:245px;top:405.20px;font-size:10.5px;color:#333;font-weight:normal">.text</div>
<svg class="a" style="left:3.8px;top:418.20px" width="12" height="12" viewBox="0 0 12 12"><rect x="0.5" y="0.5" width="11" height="11" fill="#e4f8fc" stroke="#6e9ee6"/><rect x="0.5" y="0.5" width="11" height="2" fill="url(#gl)"/><path d="M8.2 3.2c-1.3-0.5-1.9 0.5-2.2 1.6l-1 3.6c-0.3 1.1-0.9 1.6-2 1.4" stroke="#2d3d60" stroke-width="1.2" fill="none"/><path d="M4.3 6.3h3" stroke="#2d3d60" stroke-width="1"/></svg>
<div class="t" style="left:20.5px;top:419.10px;font-size:10.5px;color:#333;font-weight:normal">encrypt_entry</div>
<div class="t" style="left:245px;top:419.10px;font-size:10.5px;color:#333;font-weight:normal">.text</div>
<svg class="a" style="left:3.8px;top:432.10px" width="12" height="12" viewBox="0 0 12 12"><rect x="0.5" y="0.5" width="11" height="11" fill="#e4f8fc" stroke="#6e9ee6"/><rect x="0.5" y="0.5" width="11" height="2" fill="url(#gl)"/><path d="M8.2 3.2c-1.3-0.5-1.9 0.5-2.2 1.6l-1 3.6c-0.3 1.1-0.9 1.6-2 1.4" stroke="#2d3d60" stroke-width="1.2" fill="none"/><path d="M4.3 6.3h3" stroke="#2d3d60" stroke-width="1"/></svg>
<div class="t" style="left:20.5px;top:433.00px;font-size:10.5px;color:#333;font-weight:normal">decrypt_entry</div>
<div class="t" style="left:245px;top:433.00px;font-size:10.5px;color:#333;font-weight:normal">.text</div>
<svg class="a" style="left:3.8px;top:446.00px" width="12" height="12" viewBox="0 0 12 12"><rect x="0.5" y="0.5" width="11" height="11" fill="#e4f8fc" stroke="#6e9ee6"/><rect x="0.5" y="0.5" width="11" height="2" fill="url(#gl)"/><path d="M8.2 3.2c-1.3-0.5-1.9 0.5-2.2 1.6l-1 3.6c-0.3 1.1-0.9 1.6-2 1.4" stroke="#2d3d60" stroke-width="1.2" fill="none"/><path d="M4.3 6.3h3" stroke="#2d3d60" stroke-width="1"/></svg>
<div class="t" style="left:20.5px;top:446.90px;font-size:10.5px;color:#333;font-weight:normal">up_decrypt</div>
<div class="t" style="left:245px;top:446.90px;font-size:10.5px;color:#333;font-weight:normal">.text</div>
<svg class="a" style="left:3.8px;top:459.90px" width="12" height="12" viewBox="0 0 12 12"><rect x="0.5" y="0.5" width="11" height="11" fill="#e4f8fc" stroke="#6e9ee6"/><rect x="0.5" y="0.5" width="11" height="2" fill="url(#gl)"/><path d="M8.2 3.2c-1.3-0.5-1.9 0.5-2.2 1.6l-1 3.6c-0.3 1.1-0.9 1.6-2 1.4" stroke="#2d3d60" stroke-width="1.2" fill="none"/><path d="M4.3 6.3h3" stroke="#2d3d60" stroke-width="1"/></svg>
<div class="t" style="left:20.5px;top:460.80px;font-size:10.5px;color:#333;font-weight:normal">startDecrypt</div>
<div class="t" style="left:245px;top:460.80px;font-size:10.5px;color:#333;font-weight:normal">.text</div>
<svg class="a" style="left:3.8px;top:473.80px" width="12" height="12" viewBox="0 0 12 12"><rect x="0.5" y="0.5" width="11" height="11" fill="#e4f8fc" stroke="#6e9ee6"/><rect x="0.5" y="0.5" width="11" height="2" fill="url(#gl)"/><path d="M8.2 3.2c-1.3-0.5-1.9 0.5-2.2 1.6l-1 3.6c-0.3 1.1-0.9 1.6-2 1.4" stroke="#2d3d60" stroke-width="1.2" fill="none"/><path d="M4.3 6.3h3" stroke="#2d3d60" stroke-width="1"/></svg>
<div class="t" style="left:20.5px;top:474.70px;font-size:10.5px;color:#333;font-weight:normal">up_encrypt</div>
<div class="t" style="left:245px;top:474.70px;font-size:10.5px;color:#333;font-weight:normal">.text</div>
<svg class="a" style="left:3.8px;top:487.70px" width="12" height="12" viewBox="0 0 12 12"><rect x="0.5" y="0.5" width="11" height="11" fill="#e4f8fc" stroke="#6e9ee6"/><rect x="0.5" y="0.5" width="11" height="2" fill="url(#gl)"/><path d="M8.2 3.2c-1.3-0.5-1.9 0.5-2.2 1.6l-1 3.6c-0.3 1.1-0.9 1.6-2 1.4" stroke="#2d3d60" stroke-width="1.2" fill="none"/><path d="M4.3 6.3h3" stroke="#2d3d60" stroke-width="1"/></svg>
<div class="t" style="left:20.5px;top:488.60px;font-size:10.5px;color:#333;font-weight:normal">startEncrypt</div>
<div class="t" style="left:245px;top:488.60px;font-size:10.5px;color:#333;font-weight:normal">.text</div>
<svg class="a" style="left:3.8px;top:501.60px" width="12" height="12" viewBox="0 0 12 12"><rect x="0.5" y="0.5" width="11" height="11" fill="#e4f8fc" stroke="#6e9ee6"/><rect x="0.5" y="0.5" width="11" height="2" fill="url(#gl)"/><path d="M8.2 3.2c-1.3-0.5-1.9 0.5-2.2 1.6l-1 3.6c-0.3 1.1-0.9 1.6-2 1.4" stroke="#2d3d60" stroke-width="1.2" fill="none"/><path d="M4.3 6.3h3" stroke="#2d3d60" stroke-width="1"/></svg>
<div class="t" style="left:20.5px;top:502.50px;font-size:10.5px;color:#333;font-weight:bold">main</div>
<div class="t" style="left:245px;top:502.50px;font-size:10.5px;color:#333;font-weight:bold">.text</div>
<svg class="a" style="left:3.8px;top:515.50px" width="12" height="12" viewBox="0 0 12 12"><rect x="0.5" y="0.5" width="11" height="11" fill="#e4f8fc" stroke="#6e9ee6"/><rect x="0.5" y="0.5" width="11" height="2" fill="url(#gl)"/><path d="M8.2 3.2c-1.3-0.5-1.9 0.5-2.2 1.6l-1 3.6c-0.3 1.1-0.9 1.6-2 1.4" stroke="#2d3d60" stroke-width="1.2" fill="none"/><path d="M4.3 6.3h3" stroke="#2d3d60" stroke-width="1"/></svg>
<div class="t" style="left:20.5px;top:516.40px;font-size:10.5px;color:#333;font-weight:normal">aes_gen_tables</div>
<div class="t" style="left:245px;top:516.40px;font-size:10.5px;color:#333;font-weight:normal">.text</div>
<svg class="a" style="left:3.8px;top:529.40px" width="12" height="12" viewBox="0 0 12 12"><rect x="0.5" y="0.5" width="11" height="11" fill="#e4f8fc" stroke="#6e9ee6"/><rect x="0.5" y="0.5" width="11" height="2" fill="url(#gl)"/><path d="M8.2 3.2c-1.3-0.5-1.9 0.5-2.2 1.6l-1 3.6c-0.3 1.1-0.9 1.6-2 1.4" stroke="#2d3d60" stroke-width="1.2" fill="none"/><path d="M4.3 6.3h3" stroke="#2d3d60" stroke-width="1"/></svg>
<div class="t" style="left:20.5px;top:530.30px;font-size:10.5px;color:#333;font-weight:normal">mbedtls_aes_free</div>
<div class="t" style="left:245px;top:530.30px;font-size:10.5px;color:#333;font-weight:normal">.text</div>
<svg class="a" style="left:3.8px;top:543.30px" width="12" height="12" viewBox="0 0 12 12"><rect x="0.5" y="0.5" width="11" height="11" fill="#e4f8fc" stroke="#6e9ee6"/><rect x="0.5" y="0.5" width="11" height="2" fill="url(#gl)"/><path d="M8.2 3.2c-1.3-0.5-1.9 0.5-2.2 1.6l-1 3.6c-0.3 1.1-0.9 1.6-2 1.4" stroke="#2d3d60" stroke-width="1.2" fill="none"/><path d="M4.3 6.3h3" stroke="#2d3d60" stroke-width="1"/></svg>
<div class="t" style="left:20.5px;top:544.20px;font-size:10.5px;color:#333;font-weight:normal">mbedtls_aes_encrypt</div>
<div class="t" style="left:245px;top:544.20px;font-size:10.5px;color:#333;font-weight:normal">.text</div>
<svg class="a" style="left:3.8px;top:557.20px" width="12" height="12" viewBox="0 0 12 12"><rect x="0.5" y="0.5" width="11" height="11" fill="#e4f8fc" stroke="#6e9ee6"/><rect x="0.5" y="0.5" width="11" height="2" fill="url(#gl)"/><path d="M8.2 3.2c-1.3-0.5-1.9 0.5-2.2 1.6l-1 3.6c-0.3 1.1-0.9 1.6-2 1.4" stroke="#2d3d60" stroke-width="1.2" fill="none"/><path d="M4.3 6.3h3" stroke="#2d3d60" stroke-width="1"/></svg>
<div class="t" style="left:20.5px;top:558.10px;font-size:10.5px;color:#333;font-weight:normal">mbedtls_aes_decrypt</div>
<div class="t" style="left:245px;top:558.10px;font-size:10.5px;color:#333;font-weight:normal">.text</div>
<svg class="a" style="left:3.8px;top:571.10px" width="12" height="12" viewBox="0 0 12 12"><rect x="0.5" y="0.5" width="11" height="11" fill="#e4f8fc" stroke="#6e9ee6"/><rect x="0.5" y="0.5" width="11" height="2" fill="url(#gl)"/><path d="M8.2 3.2c-1.3-0.5-1.9 0.5-2.2 1.6l-1 3.6c-0.3 1.1-0.9 1.6-2 1.4" stroke="#2d3d60" stroke-width="1.2" fill="none"/><path d="M4.3 6.3h3" stroke="#2d3d60" stroke-width="1"/></svg>
<div class="t" style="left:20.5px;top:572.00px;font-size:10.5px;color:#333;font-weight:normal">mbedtls_aes_init</div>
<div class="t" style="left:245px;top:572.00px;font-size:10.5px;color:#333;font-weight:normal">.text</div>
<svg class="a" style="left:3.8px;top:585.00px" width="12" height="12" viewBox="0 0 12 12"><rect x="0.5" y="0.5" width="11" height="11" fill="#e4f8fc" stroke="#6e9ee6"/><rect x="0.5" y="0.5" width="11" height="2" fill="url(#gl)"/><path d="M8.2 3.2c-1.3-0.5-1.9 0.5-2.2 1.6l-1 3.6c-0.3 1.1-0.9 1.6-2 1.4" stroke="#2d3d60" stroke-width="1.2" fill="none"/><path d="M4.3 6.3h3" stroke="#2d3d60" stroke-width="1"/></svg>
<div class="t" style="left:20.5px;top:585.90px;font-size:10.5px;color:#333;font-weight:normal">mbedtls_aes_crypt_ecb</div>
<div class="t" style="left:245px;top:585.90px;font-size:10.5px;color:#333;font-weight:normal">.text</div>
<svg class="a" style="left:3.8px;top:598.90px" width="12" height="12" viewBox="0 0 12 12"><rect x="0.5" y="0.5" width="11" height="11" fill="#e4f8fc" stroke="#6e9ee6"/><rect x="0.5" y="0.5" width="11" height="2" fill="url(#gl)"/><path d="M8.2 3.2c-1.3-0.5-1.9 0.5-2.2 1.6l-1 3.6c-0.3 1.1-0.9 1.6-2 1.4" stroke="#2d3d60" stroke-width="1.2" fill="none"/><path d="M4.3 6.3h3" stroke="#2d3d60" stroke-width="1"/></svg>
<div class="t" style="left:20.5px;top:599.80px;font-size:10.5px;color:#333;font-weight:normal">mbedtls_aes_crypt_ctr</div>
<div class="t" style="left:245px;top:599.80px;font-size:10.5px;color:#333;font-weight:normal">.text</div>
<svg class="a" style="left:3.8px;top:612.80px" width="12" height="12" viewBox="0 0 12 12"><rect x="0.5" y="0.5" width="11" height="11" fill="#e4f8fc" stroke="#6e9ee6"/><rect x="0.5" y="0.5" width="11" height="2" fill="url(#gl)"/><path d="M8.2 3.2c-1.3-0.5-1.9 0.5-2.2 1.6l-1 3.6c-0.3 1.1-0.9 1.6-2 1.4" stroke="#2d3d60" stroke-width="1.2" fill="none"/><path d="M4.3 6.3h3" stroke="#2d3d60" stroke-width="1"/></svg>
<div class="t" style="left:20.5px;top:613.70px;font-size:10.5px;color:#333;font-weight:normal">mbedtls_aes_crypt_cfb8</div>
<div class="t" style="left:245px;top:613.70px;font-size:10.5px;color:#333;font-weight:normal">.text</div>
<svg class="a" style="left:3.8px;top:626.70px" width="12" height="12" viewBox="0 0 12 12"><rect x="0.5" y="0.5" width="11" height="11" fill="#e4f8fc" stroke="#6e9ee6"/><rect x="0.5" y="0.5" width="11" height="2" fill="url(#gl)"/><path d="M8.2 3.2c-1.3-0.5-1.9 0.5-2.2 1.6l-1 3.6c-0.3 1.1-0.9 1.6-2 1.4" stroke="#2d3d60" stroke-width="1.2" fill="none"/><path d="M4.3 6.3h3" stroke="#2d3d60" stroke-width="1"/></svg>
<div class="t" style="left:20.5px;top:627.60px;font-size:10.5px;color:#333;font-weight:normal">mbedtls_aes_crypt_cfb128</div>
<div class="t" style="left:245px;top:627.60px;font-size:10.5px;color:#333;font-weight:normal">.text</div>
</div>
<div class="a" style="left:285px;top:104px;width:11px;height:646px;background:#dcdad5;border-left:1px solid #d0cdc8"></div>
<div class="a" style="left:285px;top:104px;width:10px;height:11px;background:#f8f7f5;border:1px solid #d6d3ce"></div>
<svg class="a" style="left:287px;top:107px" width="7" height="4" viewBox="0 0 7 4"><path d="M0 4h7l-3.5-4z" fill="#3c3c3c"/></svg>
<div class="a" style="left:286px;top:158px;width:9px;height:35px;background:#f9f8f6;border:1px solid #d8d5d0;border-radius:1px"></div>
<div class="a" style="left:285px;top:739px;width:10px;height:11px;background:#f8f7f5;border:1px solid #d6d3ce"></div>
<svg class="a" style="left:287px;top:743px" width="7" height="4" viewBox="0 0 7 4"><path d="M0 0h7l-3.5 4z" fill="#3c3c3c"/></svg>
<div class="a" style="left:1px;top:750px;width:294px;height:11px;background:#dcdad5;border-top:1px solid #cfccc7"></div>
<div class="a" style="left:1px;top:750px;width:10px;height:11px;background:#f8f7f5;border:1px solid #d6d3ce"></div>
<svg class="a" style="left:4px;top:752px" width="4" height="7" viewBox="0 0 4 7"><path d="M4 0v7l-4-3.5z" fill="#3c3c3c"/></svg>
<div class="a" style="left:11px;top:751px;width:97px;height:10px;background:#f0efec;border:1px solid #d8d5d0"></div>
<div class="a" style="left:274px;top:750px;width:11px;height:11px;background:#f8f7f5;border:1px solid #d6d3ce"></div>
<svg class="a" style="left:278px;top:752px" width="4" height="7" viewBox="0 0 4 7"><path d="M0 0v7l4-3.5z" fill="#3c3c3c"/></svg>
<div class="a" style="left:285px;top:750px;width:10px;height:11px;background:#e8e6e2;border-top:1px solid #cfccc7"></div>
<div class="t" style="left:5px;top:765px;font-size:10.8px;color:#4a4a4a">Line 77 of 786</div>
<div class="a" style="left:296px;top:86px;width:704px;height:26px;background:#eeebe7"></div>
<div class="a" style="left:298px;top:88.5px;width:132.0px;height:21.5px;background:#e1dfda;border:1px solid #cdcac5;border-bottom:none;border-radius:3px 3px 0 0"></div>
<div class="t" style="left:337.5px;top:94.5px;font-size:9.9px;color:#333">IDA View-A</div>
<svg class="a" style="left:407px;top:94px" width="10" height="10" viewBox="0 0 10 10"><path d="M2.2 0.6L3 0.2L9.8 8.1Q9.6 9.7 8.2 9.5Z" fill="#222"/><path d="M7.4 0.5Q8.8-0.3 9.3 1.1L2.2 9.7Q0.6 10 0.2 9.3Z" fill="#111"/><path d="M2.2 0.6L3 0.2L5 2.6L4.2 3.3Z" fill="#999"/></svg>
<svg class="a" style="left:308px;top:92px" width="13" height="13" viewBox="0 0 13 13"><rect x="0" y="0" width="11" height="11" fill="#5aa6ec"/><rect x="0" y="0" width="11" height="2.5" fill="url(#gl)"/><rect x="1.5" y="3" width="2.5" height="7" fill="#eafcff"/><rect x="4.5" y="2.5" width="8" height="10" rx="1" fill="#dfeaf8" stroke="#6f8fb8"/><path d="M7 5h4.5M7 7.5h4.5M7 10h4.5" stroke="#6a7890" stroke-width="1"/></svg>
<div class="a" style="left:430.5px;top:87px;width:131.5px;height:26px;background:#f4f2ef;border:1px solid #cbc8c3;border-bottom:none;border-radius:3px 3px 0 0"></div>
<div class="t" style="left:459.0px;top:94.5px;font-size:10.6px;color:#333">Pseudocode-A</div>
<svg class="a" style="left:539px;top:94px" width="10" height="10" viewBox="0 0 10 10"><path d="M2.2 0.6L3 0.2L9.8 8.1Q9.6 9.7 8.2 9.5Z" fill="#222"/><path d="M7.4 0.5Q8.8-0.3 9.3 1.1L2.2 9.7Q0.6 10 0.2 9.3Z" fill="#111"/><path d="M2.2 0.6L3 0.2L5 2.6L4.2 3.3Z" fill="#999"/></svg>
<svg class="a" style="left:439.5px;top:92px" width="13" height="13" viewBox="0 0 13 13"><rect x="0" y="0" width="11" height="11" fill="#5aa6ec"/><rect x="0" y="0" width="11" height="2.5" fill="url(#gl)"/><rect x="1.5" y="3" width="2.5" height="7" fill="#eafcff"/><rect x="4.5" y="2.5" width="8" height="10" rx="1" fill="#dfeaf8" stroke="#6f8fb8"/><path d="M7 5h4.5M7 7.5h4.5M7 10h4.5" stroke="#6a7890" stroke-width="1"/></svg>
<div class="a" style="left:562.5px;top:88.5px;width:131.0px;height:21.5px;background:#e1dfda;border:1px solid #cdcac5;border-bottom:none;border-radius:3px 3px 0 0"></div>
<div class="t" style="left:589.5px;top:94.5px;font-size:10.7px;color:#333">Strings window</div>
<svg class="a" style="left:671px;top:94px" width="10" height="10" viewBox="0 0 10 10"><path d="M2.2 0.6L3 0.2L9.8 8.1Q9.6 9.7 8.2 9.5Z" fill="#222"/><path d="M7.4 0.5Q8.8-0.3 9.3 1.1L2.2 9.7Q0.6 10 0.2 9.3Z" fill="#111"/><path d="M2.2 0.6L3 0.2L5 2.6L4.2 3.3Z" fill="#999"/></svg>
<svg class="a" style="left:572.5px;top:92px" width="13" height="13" viewBox="0 0 13 13"><rect x="0.5" y="0.5" width="12" height="12" fill="#e6f4fb" stroke="#79a6e6"/><rect x="0.5" y="0.5" width="12" height="2.2" fill="#3f86e6"/><text x="6.5" y="10.5" font-family="Liberation Sans" font-weight="bold" font-size="8" fill="#2a9a2a" text-anchor="middle">'s'</text></svg>
<div class="a" style="left:693.5px;top:88.5px;width:132.5px;height:21.5px;background:#e1dfda;border:1px solid #cdcac5;border-bottom:none;border-radius:3px 3px 0 0"></div>
<div class="t" style="left:731.5px;top:94.5px;font-size:10.0px;color:#333">Hex View-1</div>
<svg class="a" style="left:803px;top:94px" width="10" height="10" viewBox="0 0 10 10"><path d="M2.2 0.6L3 0.2L9.8 8.1Q9.6 9.7 8.2 9.5Z" fill="#222"/><path d="M7.4 0.5Q8.8-0.3 9.3 1.1L2.2 9.7Q0.6 10 0.2 9.3Z" fill="#111"/><path d="M2.2 0.6L3 0.2L5 2.6L4.2 3.3Z" fill="#999"/></svg>
<svg class="a" style="left:703.5px;top:92px" width="13" height="13" viewBox="0 0 13 13"><rect x="0.5" y="0.5" width="12" height="12" fill="#e6f4fb" stroke="#79a6e6"/><rect x="0.5" y="0.5" width="12" height="2.2" fill="#3f86e6"/><circle cx="6.5" cy="7.2" r="3.4" fill="none" stroke="#4a6ae0" stroke-width="1.4"/></svg>
<div class="a" style="left:826.5px;top:88.5px;width:131.5px;height:21.5px;background:#e1dfda;border:1px solid #cdcac5;border-bottom:none;border-radius:3px 3px 0 0"></div>
<div class="t" style="left:864.5px;top:94.5px;font-size:10.9px;color:#333">Structures</div>
<svg class="a" style="left:935px;top:94px" width="10" height="10" viewBox="0 0 10 10"><path d="M2.2 0.6L3 0.2L9.8 8.1Q9.6 9.7 8.2 9.5Z" fill="#222"/><path d="M7.4 0.5Q8.8-0.3 9.3 1.1L2.2 9.7Q0.6 10 0.2 9.3Z" fill="#111"/><path d="M2.2 0.6L3 0.2L5 2.6L4.2 3.3Z" fill="#999"/></svg>
<svg class="a" style="left:836.5px;top:92px" width="13" height="13" viewBox="0 0 13 13"><rect x="0.5" y="0.5" width="12" height="12" fill="#e6f4fb" stroke="#79a6e6"/><rect x="0.5" y="0.5" width="12" height="2.2" fill="#3f86e6"/><path d="M3.5 11l3-7.5 3 7.5M4.7 8.5h3.6" stroke="#2d55b0" stroke-width="1.3" fill="none"/></svg>
<div class="a" style="left:958.5px;top:88.5px;width:50px;height:21.5px;background:#e1dfda;border:1px solid #cdcac5;border-bottom:none;border-radius:3px 3px 0 0"></div>
<svg class="a" style="left:966px;top:92px" width="13" height="13" viewBox="0 0 13 13"><rect x="0.5" y="0.5" width="12" height="12" fill="#e6f4fb" stroke="#79a6e6"/><rect x="0.5" y="0.5" width="12" height="2.2" fill="#3f86e6"/><path d="M3 5h1M3 7.5h1M3 10h1M5 5h5M5 7.5h5M5 10h5" stroke="#3f6fc0" stroke-width="1"/></svg>
<div class="a" style="left:298px;top:112px;width:702px;height:648px;background:#2b2b2b"></div>
<div class="a" style="left:298px;top:760px;width:43px;height:16px;background:#2b2b2b"></div>
<div class="a" style="left:341px;top:112px;width:2px;height:648px;background:#5c5c5c"></div>
<div class="a" style="left:342px;top:760px;width:658px;height:16px;background:#f3f1ed;border-bottom:1px solid #d5d2cd"></div>
<div class="t" style="left:342.5px;top:765px;font-family:'Liberation Mono';font-size:9px;color:#333">00002314 encrypt_file:102</div>
<div class="a" style="left:302.5px;top:114.30px;width:9px;height:9px;border-radius:50%;background:#4fc3f7"></div>
<div class="code" style="left:316.5px;top:112.20px;width:22px;text-align:right;color:#6a6a6a">71</div>
<div class="code" style="left:435.14px;top:112.90px"><span class="p">*</span><span class="v">rand_buf</span><span class="p">++ = </span><span class="f">rand</span><span class="p">();</span></div>
<div class="a" style="left:302.5px;top:127.43px;width:9px;height:9px;border-radius:50%;background:#4fc3f7"></div>
<div class="code" style="left:316.5px;top:125.33px;width:22px;text-align:right;color:#6a6a6a">72</div>
<div class="code" style="left:419.70px;top:126.03px"><span class="k">while</span><span class="p"> ( </span><span class="v">rand_buf</span><span class="p"> != &amp;</span><span class="v">md_ctx</span><span class="p"> );</span></div>
<div class="a" style="left:302.5px;top:140.56px;width:9px;height:9px;border-radius:50%;background:#4fc3f7"></div>
<div class="code" style="left:316.5px;top:138.46px;width:22px;text-align:right;color:#6a6a6a">73</div>
<div class="code" style="left:419.70px;top:139.16px"><span class="f">mbedtls_md_init</span><span class="p">(&amp;</span><span class="v">md_ctx</span><span class="p">);</span></div>
<div class="a" style="left:302.5px;top:153.69px;width:9px;height:9px;border-radius:50%;background:#4fc3f7"></div>
<div class="code" style="left:316.5px;top:151.59px;width:22px;text-align:right;color:#6a6a6a">74</div>
<div class="code" style="left:419.70px;top:152.29px"><span class="v">v12</span><span class="p"> = </span><span class="f">mbedtls_md_info_from_type</span><span class="p">(</span><span class="n">6LL</span><span class="p">);</span></div>
<div class="a" style="left:302.5px;top:166.82px;width:9px;height:9px;border-radius:50%;background:#4fc3f7"></div>
<div class="code" style="left:316.5px;top:164.72px;width:22px;text-align:right;color:#6a6a6a">75</div>
<div class="code" style="left:419.70px;top:165.42px"><span class="v">v13</span><span class="p"> = </span><span class="f">mbedtls_md_setup</span><span class="p">(&amp;</span><span class="v">md_ctx</span><span class="p">, </span><span class="v">v12</span><span class="p">, </span><span class="n">1LL</span><span class="p">);</span></div>
<div class="a" style="left:302.5px;top:179.95px;width:9px;height:9px;border-radius:50%;background:#4fc3f7"></div>
<div class="code" style="left:316.5px;top:177.85px;width:22px;text-align:right;color:#6a6a6a">76</div>
<div class="code" style="left:419.70px;top:178.55px"><span class="k">if</span><span class="p"> ( </span><span class="v">v13</span><span class="p"> )</span></div>
<div class="code" style="left:316.5px;top:190.98px;width:22px;text-align:right;color:#6a6a6a">77</div>
<div class="code" style="left:419.70px;top:191.68px"><span class="p">{</span></div>
<div class="a" style="left:302.5px;top:206.21px;width:9px;height:9px;border-radius:50%;background:#4fc3f7"></div>
<div class="code" style="left:316.5px;top:204.11px;width:22px;text-align:right;color:#6a6a6a">78</div>
<div class="code" style="left:435.14px;top:204.81px"><span class="f">printf</span><span class="p">(</span><span class="s">&quot;  ! mbedtls_md_setup() returned -0x%04x\n&quot;</span><span class="p">, (</span><span class="y">unsigned int</span><span class="p">)-</span><span class="v">v13</span><span class="p">);</span></div>
<div class="a" style="left:302.5px;top:219.34px;width:9px;height:9px;border-radius:50%;background:#4fc3f7"></div>
<div class="code" style="left:316.5px;top:217.24px;width:22px;text-align:right;color:#6a6a6a">79</div>
<div class="code" style="left:435.14px;top:217.94px"><span class="f">fclose</span><span class="p">(</span><span class="v">stream</span><span class="p">);</span></div>
<div class="a" style="left:302.5px;top:232.47px;width:9px;height:9px;border-radius:50%;background:#4fc3f7"></div>
<div class="code" style="left:316.5px;top:230.37px;width:22px;text-align:right;color:#6a6a6a">80</div>
<div class="code" style="left:435.14px;top:231.07px"><span class="f">fclose</span><span class="p">(</span><span class="v">s</span><span class="p">);</span></div>
<div class="a" style="left:302.5px;top:245.60px;width:9px;height:9px;border-radius:50%;background:#4fc3f7"></div>
<div class="code" style="left:316.5px;top:243.50px;width:22px;text-align:right;color:#6a6a6a">81</div>
<div class="code" style="left:435.14px;top:244.20px"><span class="f">unlink</span><span class="p">(</span><span class="v">v2</span><span class="p">);</span></div>
<div class="a" style="left:302.5px;top:258.73px;width:9px;height:9px;border-radius:50%;background:#4fc3f7"></div>
<div class="code" style="left:316.5px;top:256.63px;width:22px;text-align:right;color:#6a6a6a">82</div>
<div class="code" style="left:435.14px;top:257.33px"><span class="f">LODWORD</span><span class="p">(</span><span class="v">v4</span><span class="p">) = </span><span class="f">mbedtls_md_free</span><span class="p">(&amp;</span><span class="v">md_ctx</span><span class="p">);</span></div>
<div class="code" style="left:316.5px;top:269.76px;width:22px;text-align:right;color:#6a6a6a">83</div>
<div class="code" style="left:419.70px;top:270.46px"><span class="p">}</span></div>
<div class="code" style="left:316.5px;top:282.89px;width:22px;text-align:right;color:#6a6a6a">84</div>
<div class="code" style="left:419.70px;top:283.59px"><span class="k">else</span></div>
<div class="code" style="left:316.5px;top:296.02px;width:22px;text-align:right;color:#6a6a6a">85</div>
<div class="code" style="left:419.70px;top:296.72px"><span class="p">{</span></div>
<div class="a" style="left:302.5px;top:311.25px;width:9px;height:9px;border-radius:50%;background:#4fc3f7"></div>
<div class="code" style="left:316.5px;top:309.15px;width:22px;text-align:right;color:#6a6a6a">86</div>
<div class="code" style="left:435.14px;top:309.85px"><span class="v">i</span><span class="p"> = </span><span class="n">0</span><span class="p">;</span></div>
<div class="a" style="left:302.5px;top:324.38px;width:9px;height:9px;border-radius:50%;background:#4fc3f7"></div>
<div class="code" style="left:316.5px;top:322.28px;width:22px;text-align:right;color:#6a6a6a">87</div>
<div class="code" style="left:435.14px;top:322.98px"><span class="f">mbedtls_md_starts</span><span class="p">(&amp;</span><span class="v">md_ctx</span><span class="p">);</span></div>
<div class="a" style="left:302.5px;top:337.51px;width:9px;height:9px;border-radius:50%;background:#4fc3f7"></div>
<div class="code" style="left:316.5px;top:335.41px;width:22px;text-align:right;color:#6a6a6a">88</div>
<div class="code" style="left:435.14px;top:336.11px"><span class="f">mbedtls_md_update</span><span class="p">(&amp;</span><span class="v">md_ctx</span><span class="p">, &amp;</span><span class="v">input_output</span><span class="p">, </span><span class="n">8LL</span><span class="p">);</span></div>
<div class="a" style="left:302.5px;top:350.64px;width:9px;height:9px;border-radius:50%;background:#4fc3f7"></div>
<div class="code" style="left:316.5px;top:348.54px;width:22px;text-align:right;color:#6a6a6a">89</div>
<div class="code" style="left:435.14px;top:349.24px"><span class="v">filename_len</span><span class="p"> = </span><span class="f">strlen</span><span class="p">(</span><span class="v">filename_</span><span class="p">);</span></div>
<div class="a" style="left:302.5px;top:363.77px;width:9px;height:9px;border-radius:50%;background:#4fc3f7"></div>
<div class="code" style="left:316.5px;top:361.67px;width:22px;text-align:right;color:#6a6a6a">90</div>
<div class="code" style="left:435.14px;top:362.37px"><span class="f">mbedtls_md_update</span><span class="p">(&amp;</span><span class="v">md_ctx</span><span class="p">, </span><span class="v">filename_</span><span class="p">, </span><span class="v">filename_len</span><span class="p">);</span></div>
<div class="a" style="left:302.5px;top:376.90px;width:9px;height:9px;border-radius:50%;background:#4fc3f7"></div>
<div class="code" style="left:316.5px;top:374.80px;width:22px;text-align:right;color:#6a6a6a">91</div>
<div class="code" style="left:435.14px;top:375.50px"><span class="f">mbedtls_md_finish</span><span class="p">(&amp;</span><span class="v">md_ctx</span><span class="p">, </span><span class="v">temp_hash_outbuf</span><span class="p">);</span></div>
<div class="a" style="left:302.5px;top:390.03px;width:9px;height:9px;border-radius:50%;background:#4fc3f7"></div>
<div class="code" style="left:316.5px;top:387.93px;width:22px;text-align:right;color:#6a6a6a">92</div>
<div class="code" style="left:435.14px;top:388.63px"><span class="p">*(</span><span class="y">_QWORD *</span><span class="p">)</span><span class="v">aes_iv</span><span class="p"> = *(</span><span class="y">_QWORD *</span><span class="p">)</span><span class="v">temp_hash_outbuf</span><span class="p">;</span></div>
<div class="a" style="left:302.5px;top:403.16px;width:9px;height:9px;border-radius:50%;background:#4fc3f7"></div>
<div class="code" style="left:316.5px;top:401.06px;width:22px;text-align:right;color:#6a6a6a">93</div>
<div class="code" style="left:435.14px;top:401.76px"><span class="p">*(</span><span class="y">_QWORD *</span><span class="p">)&amp;</span><span class="v">aes_iv</span><span class="p">[</span><span class="n">8</span><span class="p">] = *(</span><span class="y">_QWORD *</span><span class="p">)&amp;</span><span class="v">temp_hash_outbuf</span><span class="p">[</span><span class="n">8</span><span class="p">];</span></div>
<div class="a" style="left:302.5px;top:416.29px;width:9px;height:9px;border-radius:50%;background:#4fc3f7"></div>
<div class="code" style="left:316.5px;top:414.19px;width:22px;text-align:right;color:#6a6a6a">94</div>
<div class="code" style="left:435.14px;top:414.89px"><span class="v">aes_iv</span><span class="p">[</span><span class="n">15</span><span class="p">] = </span><span class="v">file_size</span><span class="p"> &amp; </span><span class="n">0x1F</span><span class="p"> | </span><span class="v">temp_hash_outbuf</span><span class="p">[</span><span class="n">15</span><span class="p">] &amp; </span><span class="n">0xE0</span><span class="p">;</span></div>
<div class="a" style="left:302.5px;top:429.42px;width:9px;height:9px;border-radius:50%;background:#4fc3f7"></div>
<div class="code" style="left:316.5px;top:427.32px;width:22px;text-align:right;color:#6a6a6a">95</div>
<div class="code" style="left:435.14px;top:428.02px"><span class="f">mbedtls_aes_init</span><span class="p">(&amp;</span><span class="v">aes_ctx</span><span class="p">);</span></div>
<div class="a" style="left:302.5px;top:442.55px;width:9px;height:9px;border-radius:50%;background:#4fc3f7"></div>
<div class="code" style="left:316.5px;top:440.45px;width:22px;text-align:right;color:#6a6a6a">96</div>
<div class="code" style="left:435.14px;top:441.15px"><span class="p">*(</span><span class="y">_QWORD *</span><span class="p">)&amp;</span><span class="v">temp_hash_outbuf</span><span class="p">[</span><span class="n">16</span><span class="p">] = </span><span class="n">0LL</span><span class="p">;</span></div>
<div class="a" style="left:302.5px;top:455.68px;width:9px;height:9px;border-radius:50%;background:#4fc3f7"></div>
<div class="code" style="left:316.5px;top:453.58px;width:22px;text-align:right;color:#6a6a6a">97</div>
<div class="code" style="left:435.14px;top:454.28px"><span class="p">*(</span><span class="y">_QWORD *</span><span class="p">)&amp;</span><span class="v">temp_hash_outbuf</span><span class="p">[</span><span class="n">24</span><span class="p">] = </span><span class="n">0LL</span><span class="p">;</span></div>
<div class="a" style="left:302.5px;top:468.81px;width:9px;height:9px;border-radius:50%;background:#4fc3f7"></div>
<div class="code" style="left:316.5px;top:466.71px;width:22px;text-align:right;color:#6a6a6a">98</div>
<div class="code" style="left:435.14px;top:467.41px"><span class="p">*(</span><span class="y">_QWORD *</span><span class="p">)</span><span class="v">temp_hash_outbuf</span><span class="p"> = *(</span><span class="y">_QWORD *</span><span class="p">)</span><span class="v">aes_iv</span><span class="p">;</span></div>
<div class="a" style="left:302.5px;top:481.94px;width:9px;height:9px;border-radius:50%;background:#4fc3f7"></div>
<div class="code" style="left:316.5px;top:479.84px;width:22px;text-align:right;color:#6a6a6a">99</div>
<div class="code" style="left:435.14px;top:480.54px"><span class="p">*(</span><span class="y">_QWORD *</span><span class="p">)&amp;</span><span class="v">temp_hash_outbuf</span><span class="p">[</span><span class="n">8</span><span class="p">] = *(</span><span class="y">_QWORD *</span><span class="p">)&amp;</span><span class="v">aes_iv</span><span class="p">[</span><span class="n">8</span><span class="p">];</span></div>
<div class="code" style="left:316.5px;top:492.97px;width:22px;text-align:right;color:#6a6a6a">100</div>
<div class="code" style="left:435.14px;top:493.67px"><span class="k">do</span></div>
<div class="code" style="left:316.5px;top:506.10px;width:22px;text-align:right;color:#6a6a6a">101</div>
<div class="code" style="left:435.14px;top:506.80px"><span class="p">{</span></div>
<div class="a" style="left:302.5px;top:521.33px;width:9px;height:9px;border-radius:50%;background:#4fc3f7"></div>
<div class="code" style="left:316.5px;top:519.23px;width:22px;text-align:right;color:#6a6a6a">102</div>
<div class="code" style="left:450.58px;top:519.93px"><span class="p">++</span><span class="v">i</span><span class="p">;</span></div>
<div class="a" style="left:302.5px;top:534.46px;width:9px;height:9px;border-radius:50%;background:#4fc3f7"></div>
<div class="code" style="left:316.5px;top:532.36px;width:22px;text-align:right;color:#6a6a6a">103</div>
<div class="code" style="left:450.58px;top:533.06px"><span class="f">mbedtls_md_starts</span><span class="p">(&amp;</span><span class="v">md_ctx</span><span class="p">);</span></div>
<div class="a" style="left:302.5px;top:547.59px;width:9px;height:9px;border-radius:50%;background:#4fc3f7"></div>
<div class="code" style="left:316.5px;top:545.49px;width:22px;text-align:right;color:#6a6a6a">104</div>
<div class="code" style="left:450.58px;top:546.19px"><span class="f">mbedtls_md_update</span><span class="p">(&amp;</span><span class="v">md_ctx</span><span class="p">, </span><span class="v">temp_hash_outbuf</span><span class="p">, </span><span class="n">32LL</span><span class="p">);</span></div>
<div class="a" style="left:302.5px;top:560.72px;width:9px;height:9px;border-radius:50%;background:#4fc3f7"></div>
<div class="code" style="left:316.5px;top:558.62px;width:22px;text-align:right;color:#6a6a6a">105</div>
<div class="code" style="left:450.58px;top:559.32px"><span class="f">mbedtls_md_update</span><span class="p">(&amp;</span><span class="v">md_ctx</span><span class="p">, </span><span class="v">RANDS_32</span><span class="p">, </span><span class="n">32LL</span><span class="p">);</span></div>
<div class="a" style="left:302.5px;top:573.85px;width:9px;height:9px;border-radius:50%;background:#4fc3f7"></div>
<div class="code" style="left:316.5px;top:571.75px;width:22px;text-align:right;color:#6a6a6a">106</div>
<div class="code" style="left:450.58px;top:572.45px"><span class="f">mbedtls_md_finish</span><span class="p">(&amp;</span><span class="v">md_ctx</span><span class="p">, </span><span class="v">temp_hash_outbuf</span><span class="p">);</span></div>
<div class="code" style="left:316.5px;top:584.88px;width:22px;text-align:right;color:#6a6a6a">107</div>
<div class="code" style="left:435.14px;top:585.58px"><span class="p">}</span></div>
<div class="a" style="left:302.5px;top:600.11px;width:9px;height:9px;border-radius:50%;background:#4fc3f7"></div>
<div class="code" style="left:316.5px;top:598.01px;width:22px;text-align:right;color:#6a6a6a">108</div>
<div class="code" style="left:435.14px;top:598.71px"><span class="k">while</span><span class="p"> ( </span><span class="v">i</span><span class="p"> != </span><span class="n">8</span><span class="p"> );</span></div>
<div class="a" style="left:302.5px;top:613.24px;width:9px;height:9px;border-radius:50%;background:#4fc3f7"></div>
<div class="code" style="left:316.5px;top:611.14px;width:22px;text-align:right;color:#6a6a6a">109</div>
<div class="code" style="left:435.14px;top:611.84px"><span class="f">mbedtls_aes_setkey_enc</span><span class="p">(&amp;</span><span class="v">aes_ctx</span><span class="p">, </span><span class="v">temp_hash_outbuf</span><span class="p">, </span><span class="n">256LL</span><span class="p">);</span></div>
<div class="a" style="left:302.5px;top:626.37px;width:9px;height:9px;border-radius:50%;background:#4fc3f7"></div>
<div class="code" style="left:316.5px;top:624.27px;width:22px;text-align:right;color:#6a6a6a">110</div>
<div class="code" style="left:435.14px;top:624.97px"><span class="f">mbedtls_md_hmac_starts</span><span class="p">(&amp;</span><span class="v">md_ctx</span><span class="p">, </span><span class="v">temp_hash_outbuf</span><span class="p">, </span><span class="n">32LL</span><span class="p">);</span></div>
<div class="a" style="left:302.5px;top:639.50px;width:9px;height:9px;border-radius:50%;background:#4fc3f7"></div>
<div class="code" style="left:316.5px;top:637.40px;width:22px;text-align:right;color:#6a6a6a">111</div>
<div class="code" style="left:435.14px;top:638.10px"><span class="v">v16</span><span class="p"> = </span><span class="n">32LL</span><span class="p">;</span></div>
<div class="a" style="left:302.5px;top:652.63px;width:9px;height:9px;border-radius:50%;background:#4fc3f7"></div>
<div class="code" style="left:316.5px;top:650.53px;width:22px;text-align:right;color:#6a6a6a">112</div>
<div class="code" style="left:435.14px;top:651.23px"><span class="v">ptr</span><span class="p"> = </span><span class="f">public_encrypt</span><span class="p">((</span><span class="y">__int64</span><span class="p">)</span><span class="v">RANDS_32</span><span class="p">, </span><span class="n">32</span><span class="p">, (</span><span class="y">__int64</span><span class="p">)&amp;</span><span class="v">input_output</span><span class="p">);</span></div>
<div class="a" style="left:302.5px;top:665.76px;width:9px;height:9px;border-radius:50%;background:#4fc3f7"></div>
<div class="code" style="left:316.5px;top:663.66px;width:22px;text-align:right;color:#6a6a6a">113</div>
<div class="code" style="left:435.14px;top:664.36px"><span class="k">if</span><span class="p"> ( </span><span class="v">ptr</span><span class="p"> != -</span><span class="n">1</span><span class="p"> )</span></div>
<div class="code" style="left:316.5px;top:676.79px;width:22px;text-align:right;color:#6a6a6a">114</div>
<div class="code" style="left:435.14px;top:677.49px"><span class="p">{</span></div>
<div class="a" style="left:302.5px;top:692.02px;width:9px;height:9px;border-radius:50%;background:#4fc3f7"></div>
<div class="code" style="left:316.5px;top:689.92px;width:22px;text-align:right;color:#6a6a6a">115</div>
<div class="code" style="left:450.58px;top:690.62px"><span class="f">fwrite</span><span class="p">(&amp;</span><span class="v">ptr</span><span class="p">, </span><span class="n">1uLL</span><span class="p">, </span><span class="n">4uLL</span><span class="p">, </span><span class="v">s</span><span class="p">);</span></div>
<div class="a" style="left:302.5px;top:705.15px;width:9px;height:9px;border-radius:50%;background:#4fc3f7"></div>
<div class="code" style="left:316.5px;top:703.05px;width:22px;text-align:right;color:#6a6a6a">116</div>
<div class="code" style="left:450.58px;top:703.75px"><span class="f">fwrite</span><span class="p">(&amp;</span><span class="v">input_output</span><span class="p">, </span><span class="n">1uLL</span><span class="p">, </span><span class="v">ptr</span><span class="p">, </span><span class="v">s</span><span class="p">);</span></div>
<div class="a" style="left:302.5px;top:718.28px;width:9px;height:9px;border-radius:50%;background:#4fc3f7"></div>
<div class="code" style="left:316.5px;top:716.18px;width:22px;text-align:right;color:#6a6a6a">117</div>
<div class="code" style="left:450.58px;top:716.88px"><span class="f">fwrite</span><span class="p">(</span><span class="v">aes_iv</span><span class="p">, </span><span class="n">1uLL</span><span class="p">, </span><span class="n">0x10uLL</span><span class="p">, </span><span class="v">s</span><span class="p">);</span></div>
<div class="a" style="left:302.5px;top:731.41px;width:9px;height:9px;border-radius:50%;background:#4fc3f7"></div>
<div class="code" style="left:316.5px;top:729.31px;width:22px;text-align:right;color:#6a6a6a">118</div>
<div class="code" style="left:450.58px;top:730.01px"><span class="k">if</span><span class="p"> ( </span><span class="v">file_size</span><span class="p"> &lt;= </span><span class="n">0</span><span class="p"> )</span></div>
<div class="code" style="left:316.5px;top:742.44px;width:22px;text-align:right;color:#6a6a6a">119</div>
<div class="code" style="left:450.58px;top:743.14px"><span class="p">{</span></div>
</body></html>
